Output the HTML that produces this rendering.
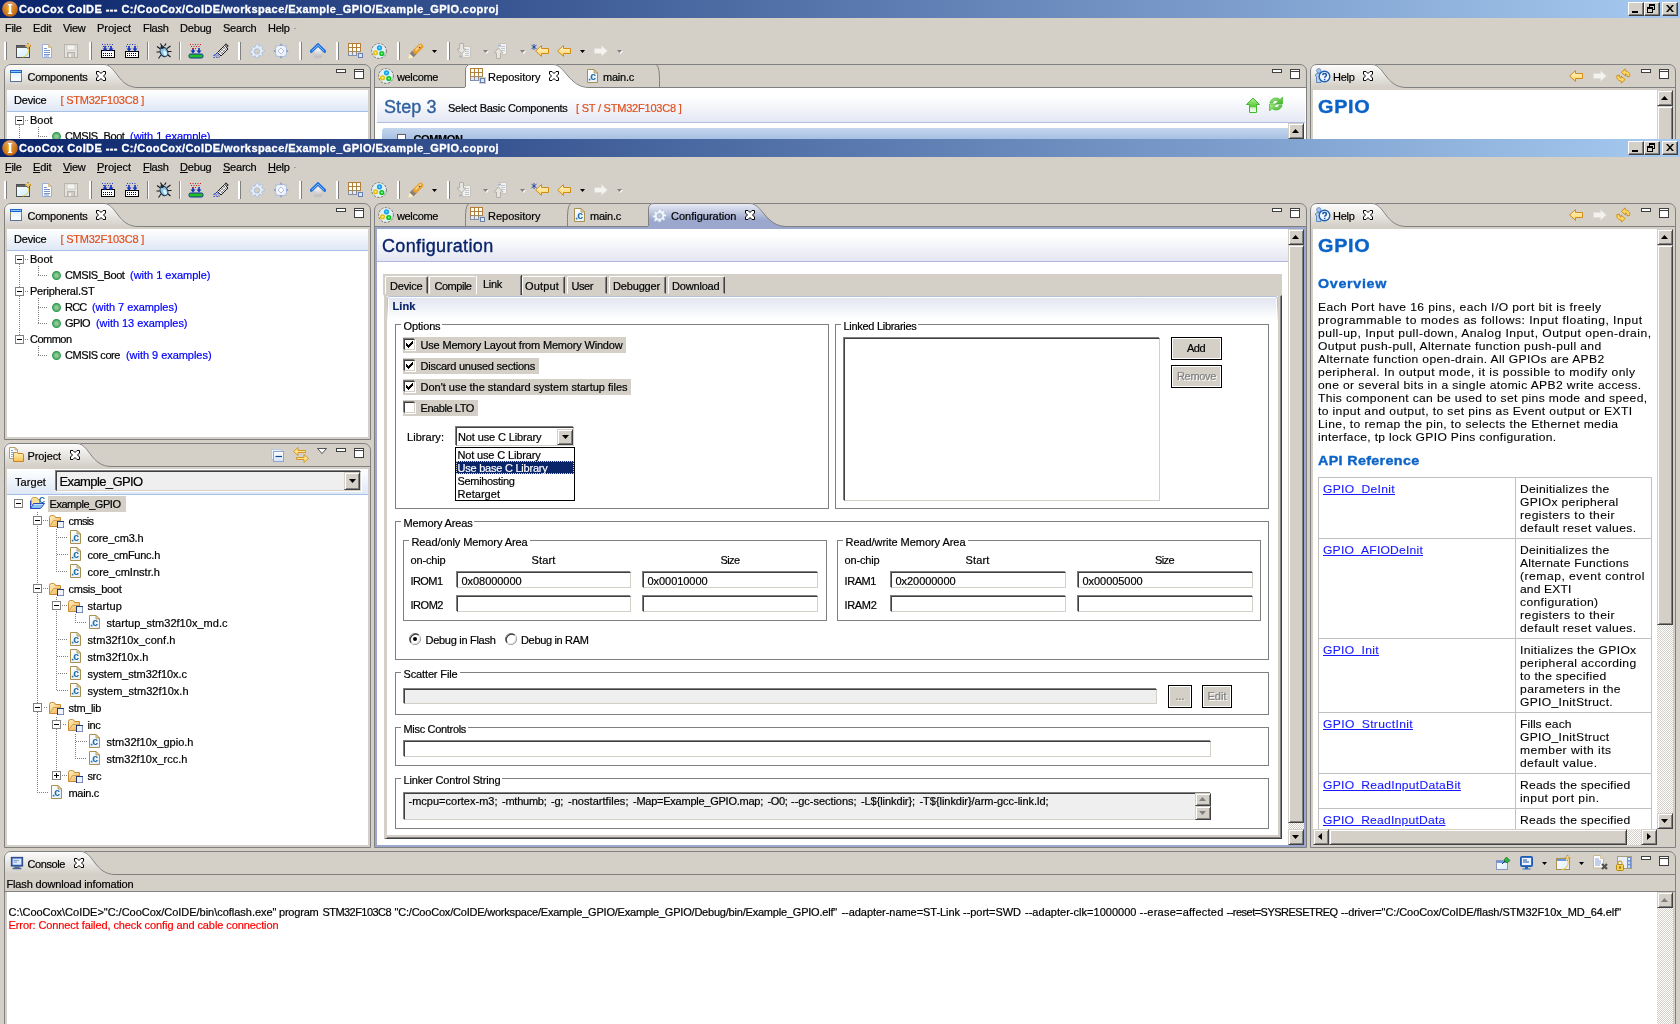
<!DOCTYPE html><html lang="en"><head><meta charset="utf-8"><title>CoIDE</title><style>
html,body{margin:0;padding:0}
body{width:1680px;height:1024px;overflow:hidden;background:#d4d0c8;position:relative;font-family:"Liberation Sans",sans-serif;font-size:11px;line-height:13px;color:#000}
div,span,svg{position:absolute;box-sizing:border-box}
span{white-space:nowrap}
.win{left:0;width:1680px;overflow:hidden}
.b{font-weight:bold}
.blue{color:#0000ff}
.org{color:#e0501c}
.sunk{border:1px solid;border-color:#404040 #d4d0c8 #d4d0c8 #404040;box-shadow:-1px -1px 0 #808080, 1px 1px 0 #fff;background:#fff}
.btn{background:#d4d0c8;border:1px solid;border-color:#fff #404040 #404040 #fff;box-shadow:inset -1px -1px 0 #808080}
.sbb{background:#d4d0c8;border:1px solid;border-color:#d4d0c8 #404040 #404040 #d4d0c8;box-shadow:inset 1px 1px 0 #fff, inset -1px -1px 0 #808080}
.grp{border:1px solid #808080;box-shadow:1px 1px 0 #fff, inset 1px 1px 0 #fff}
.lg{background:#fff;padding:0 3px}
.hv{font-family:"Liberation Sans",sans-serif}
.win{will-change:transform}
span{-webkit-text-stroke:.2px}
.vp,.vd,.vl{-webkit-text-stroke:.1px}
.vh1,.vh2{-webkit-text-stroke:.35px}
.h19{-webkit-text-stroke:.35px}
.ttl{-webkit-text-stroke:.3px #fff}
</style></head><body><div class="win" style="top:0;height:139px">
<div style="left:0px;top:0px;width:1680px;height:18px;background:linear-gradient(90deg,#0a246a 0%,#a6caf0 100%)"></div>
<svg style="left:2px;top:1px;" width="16" height="16" viewBox="0 0 16 16"><defs><radialGradient id="og" cx=".45" cy=".5" r=".55"><stop offset="0" stop-color="#f4b400"/><stop offset=".45" stop-color="#d88420"/><stop offset="1" stop-color="#c06018"/></radialGradient><linearGradient id="og2" x1="0" y1="0" x2="0" y2="1"><stop offset="0" stop-color="#fff" stop-opacity=".35"/><stop offset=".5" stop-color="#fff" stop-opacity="0"/></linearGradient></defs><circle cx="8" cy="8" r="7.800" fill="url(#og)"/><circle cx="8" cy="8" r="7.800" fill="url(#og2)"/><path d="M5.800 3h4.400v1.200H9.200v7.600h1v1.200H5.800v-1.200h1V4.200h-1z" fill="#fff"/></svg>
<span class="ttl" style="left:19px;top:3px;color:#fff;font-weight:bold;letter-spacing:0.418px;">CooCox CoIDE --- C:/CooCox/CoIDE/workspace/Example_GPIO/Example_GPIO.coproj</span>
<div class="btn" style="left:1628px;top:2px;width:16px;height:14px;"></div>
<div class="btn" style="left:1644px;top:2px;width:16px;height:14px;"></div>
<div class="btn" style="left:1662px;top:2px;width:16px;height:14px;"></div>
<div style="left:1632px;top:11px;width:6px;height:2px;background:#000"></div>
<svg style="left:1647px;top:4px;" width="8" height="9" viewBox="0 0 8 9"><path d="M2 0h6v6h-2v-1h1v-3h-4v1h-1zM0 3h6v6h-6zM1 5v3h4v-3z" fill="#000" fill-rule="evenodd"/></svg>
<svg style="left:1666px;top:5px;" width="8" height="7" viewBox="0 0 8 7"><path d="M0 0h2l2 2.500L6 0h2L5 3.500 8 7H6L4 4.500 2 7H0l3-3.500z" fill="#000"/></svg>
<span class="menu" style="left:5px;top:22px;;letter-spacing:-0.309px;">File</span>
<span class="menu" style="left:33px;top:22px;;letter-spacing:-0.117px;">Edit</span>
<span class="menu" style="left:63px;top:22px;;letter-spacing:-0.289px;">View</span>
<span class="menu" style="left:97px;top:22px;;letter-spacing:-0.036px;">Project</span>
<span class="menu" style="left:143px;top:22px;;letter-spacing:-0.281px;">Flash</span>
<span class="menu" style="left:180px;top:22px;;letter-spacing:-0.184px;">Debug</span>
<span class="menu" style="left:223px;top:22px;;letter-spacing:-0.227px;">Search</span>
<span class="menu" style="left:268px;top:22px;;letter-spacing:-0.281px;">Help</span>
<div style="left:294px;top:28px;width:2px;height:1px;background:#a0a0a0"></div>
<div style="left:4px;top:42px;width:2px;height:18px;background:#fff"></div>
<div style="left:6px;top:42px;width:1px;height:18px;background:#808080"></div>
<div style="left:89px;top:42px;width:2px;height:18px;background:#fff"></div>
<div style="left:91px;top:42px;width:1px;height:18px;background:#808080"></div>
<div style="left:238px;top:42px;width:2px;height:18px;background:#fff"></div>
<div style="left:240px;top:42px;width:1px;height:18px;background:#808080"></div>
<div style="left:299px;top:42px;width:2px;height:18px;background:#fff"></div>
<div style="left:301px;top:42px;width:1px;height:18px;background:#808080"></div>
<div style="left:336px;top:42px;width:2px;height:18px;background:#fff"></div>
<div style="left:338px;top:42px;width:1px;height:18px;background:#808080"></div>
<div style="left:397px;top:42px;width:2px;height:18px;background:#fff"></div>
<div style="left:399px;top:42px;width:1px;height:18px;background:#808080"></div>
<div style="left:447px;top:42px;width:2px;height:18px;background:#fff"></div>
<div style="left:449px;top:42px;width:1px;height:18px;background:#808080"></div>
<div style="left:147px;top:42px;width:1px;height:18px;background:#808080"></div>
<div style="left:148px;top:42px;width:1px;height:18px;background:#fff"></div>
<div style="left:179px;top:42px;width:1px;height:18px;background:#808080"></div>
<div style="left:180px;top:42px;width:1px;height:18px;background:#fff"></div>
<svg style="left:16px;top:43px;" width="16" height="16" viewBox="0 0 16 16"><defs><linearGradient id="nwg" x1="0" y1="0" x2="1" y2="1"><stop offset="0" stop-color="#fff"/><stop offset="1" stop-color="#c8ecff"/></linearGradient></defs><rect x=".5" y="2.500" width="13" height="12" fill="url(#nwg)" stroke="#505050"/><rect x="1" y="3" width="12" height="2" fill="#606060"/><path d="M12.500 6c1 4-2 7.500-6 8" fill="none" stroke="#f0d060" stroke-width="1.100"/><path d="M12 0v6M9 3h6" stroke="#c89020" stroke-width="1.800"/><path d="M12 1v4M10 3h4" stroke="#fff4c0" stroke-width=".7"/></svg>
<svg style="left:40px;top:43px;" width="16" height="16" viewBox="0 0 16 16"><path d="M2.500 1.500h6l3 3v10h-9z" fill="#fff" stroke="#9ab0d8"/><path d="M8.500 1.500v3h3z" fill="#e0cc98" stroke="#c8b078" stroke-width=".7"/><path d="M4 5.500h3M4 7.500h6M4 9.500h6M4 11.500h6M4 13h5" stroke="#6888c8" stroke-width=".9"/></svg>
<svg style="left:63px;top:43px;" width="16" height="16" viewBox="0 0 16 16"><rect x="1.5" y="1.5" width="13" height="13" fill="#e4e2dc" stroke="#b8b4ac"/><rect x="4" y="2" width="8" height="5" fill="#f4f4f2" stroke="#c0bcb4" stroke-width=".6"/><rect x="4.5" y="9.5" width="7" height="5" fill="#d0ccc4" stroke="#b8b4ac"/><rect x="6" y="11" width="2" height="3" fill="#f0f0ee"/></svg>
<svg style="left:100px;top:43px;" width="16" height="16" viewBox="0 0 16 16"><rect x="1.5" y="7.5" width="13" height="7" fill="#fff" stroke="#000"/><path d="M3 10.5h10M3 12.5h10" stroke="#000" stroke-dasharray="1 1"/><path d="M5 3v4M11 3v4" stroke="#1030c0" stroke-width="1.6"/><path d="M2.5 5.5l2.5 3 2.5-3zM8.500 5.5l2.500 3 2.500-3z" fill="#1030c0"/><path d="M2 1.500h12M3 3.500h10" stroke="#2040c0" stroke-dasharray="1 1.500"/></svg>
<svg style="left:124px;top:43px;" width="16" height="16" viewBox="0 0 16 16"><rect x="1.5" y="8.5" width="13" height="6" fill="#fff" stroke="#000"/><path d="M3 10.5h10M3 12.5h10" stroke="#000" stroke-dasharray="1 1"/><path d="M5 3v4M11 3v4" stroke="#1030c0" stroke-width="1.6"/><path d="M2.500 5.500l2.500 3 2.500-3zM8.500 5.500l2.500 3 2.500-3z" fill="#1030c0"/><path d="M3 1.500h10M2 3.500h3M11 3.500h3" stroke="#2040c0" stroke-dasharray="1 1.500"/></svg>
<svg style="left:156px;top:43px;" width="16" height="16" viewBox="0 0 16 16"><path d="M4.500 6L1 3.500M4 9H.5M5 12l-2.500 3.500M11 5.500L14.500 3M12 8.500h3.500M11.500 11.500l3 2.500M6 3.500L4.500 .5M8.500 3L10 .5" stroke="#101828" stroke-width="1.100" fill="none"/><ellipse cx="8" cy="9" rx="3.700" ry="4.800" transform="rotate(-25 8 9)" fill="#8cc4e4" stroke="#183048"/><ellipse cx="9" cy="10" rx="1.500" ry="2.600" transform="rotate(-25 9 10)" fill="#e0f4fc"/><circle cx="6.300" cy="4.300" r="1.800" fill="#182838"/></svg>
<svg style="left:188px;top:43px;" width="16" height="16" viewBox="0 0 16 16"><rect x="1" y="11" width="14" height="4" rx="1.5" fill="#20c020" stroke="#1030a0"/><path d="M5 5v4M11 5v4" stroke="#1030c0" stroke-width="1.6"/><path d="M2.500 7.500l2.500 3 2.500-3zM8.500 7.500l2.500 3 2.500-3z" fill="#1030c0"/><path d="M2 1.500h12M3 3.500h10M4 5.500h1M7 5.500h2M11 5.500h1" stroke="#d02020" stroke-dasharray="1 1.500"/></svg>
<svg style="left:213px;top:43px;" width="16" height="16" viewBox="0 0 16 16"><path d="M4.500 9.500l7-7 3.500 3.500-7 7z" fill="#fff" stroke="#202020"/><path d="M6 10l6-6M7.500 11.500l6-6M6.500 8l3.500 3.500M8.500 6L12 9.500M10.500 4L14 7.500" stroke="#606060" stroke-width=".7"/><path d="M11.500 2.500L13 .8l2.300 2.300L13.500 4.500" fill="#909090" stroke="#202020"/><path d="M.5 14.500h1.200M2.500 13h1.200M4.500 12h1.200M1.500 11.500h1.200M3.500 14.500h1.200M5.500 14h1.200M.5 12.500h1.200M3 10.500h1.200" stroke="#1030c0" stroke-width="1.200"/></svg>
<svg style="left:249px;top:43px;" width="16" height="16" viewBox="0 0 16 16"><path d="M8 .8l1.200 0 .5 2 1.300.6 1.800-1 1 1-1 1.800.6 1.300 2 .5v1.600l-2 .5-.6 1.300 1 1.800-1 1-1.800-1-1.300.6-.5 2H6.800l-.5-2L5 13.300l-1.800 1-1-1 1-1.800-.6-1.300-2-.5V8.100l2-.5.6-1.300-1-1.800 1-1 1.800 1 1.300-.6.500-2z" fill="#e4ecf6" stroke="#a8bcd8" stroke-width=".8"/><circle cx="8" cy="8.400" r="2.700" fill="#d4d0c8" stroke="#a8b8d0" stroke-width=".9"/></svg>
<svg style="left:273px;top:43px;" width="16" height="16" viewBox="0 0 16 16"><rect x="2.500" y="2.500" width="11" height="11" rx="3" fill="#eef2fa" stroke="#a8b8d8"/><path d="M8 5l3 3-3 3-3-3z" fill="#fff" stroke="#a8b8d8" stroke-width=".9"/><path d="M8 .8v1.700M8 13.500v1.700M.8 8h1.700M13.500 8h1.700" stroke="#90a4cc" stroke-width="2"/><path d="M2.500 2.500l1 1M13.500 2.500l-1 1M2.500 13.500l1-1M13.500 13.500l-1-1" stroke="#a8b8d8" stroke-dasharray="1 1"/></svg>
<svg style="left:310px;top:43px;" width="16" height="16" viewBox="0 0 16 16"><defs><linearGradient id="hmg" x1="0" y1="0" x2="0" y2="1"><stop offset="0" stop-color="#fff"/><stop offset="1" stop-color="#b8b8b8"/></linearGradient></defs><path d="M4 8v5.500q0 1.300 1.300 1.300h5.400q1.300 0 1.300-1.300V8L8 4.500z" fill="url(#hmg)" stroke="#c8c8c8" stroke-width=".6"/><path d="M1.200 8.300L8 1.800l6.800 6.500" fill="none" stroke="#2070e0" stroke-width="3" stroke-linejoin="miter" stroke-linecap="round"/><path d="M1.800 8L8 2.200 14.200 8" fill="none" stroke="#78b8ff" stroke-width="1"/></svg>
<svg style="left:348px;top:43px;" width="16" height="16" viewBox="0 0 16 16"><defs><linearGradient id="grg" x1="0" y1="0" x2="0" y2="1"><stop offset="0" stop-color="#b87c30"/><stop offset=".6" stop-color="#b08040"/><stop offset="1" stop-color="#8090b0"/></linearGradient></defs><rect x=".5" y=".5" width="12" height="12" fill="#fff" stroke="url(#grg)"/><rect x="1" y="9" width="11" height="3" fill="#dce8fc"/><path d="M4.500 .5v12M8.500 .5v12" stroke="url(#grg)"/><path d="M.5 4.500h12" stroke="#b48038"/><path d="M.5 8.500h12" stroke="#a08860"/><rect x="9" y="9" width="7" height="7" fill="#d4d0c8"/><rect x="10.500" y="10.500" width="4" height="4" fill="#dce8fc" stroke="#6880b0"/></svg>
<svg style="left:371px;top:43px;" width="16" height="16" viewBox="0 0 16 16"><circle cx="8" cy="8" r="7.400" fill="#e0f0f8" stroke="#807868" stroke-dasharray="2.500 1.200"/><circle cx="8.500" cy="4.800" r="2.600" fill="#18a0e8"/><circle cx="4.500" cy="9.800" r="2.600" fill="#e8c010"/><circle cx="10.800" cy="10.500" r="2.600" fill="#10c020"/><circle cx="8.500" cy="4.800" r="1" fill="#60e8ff"/><circle cx="4.500" cy="9.800" r="1" fill="#fff0a0"/><circle cx="10.800" cy="10.500" r="1" fill="#90ff98"/></svg>
<svg style="left:408px;top:43px;" width="16" height="16" viewBox="0 0 16 16"><path d="M.5 15.500L1.800 10.500 5.500 14.200Z" fill="#fff8d8" stroke="#f0e0a0" stroke-width=".6"/><path d="M3.600 12.400L7.800 8.200" stroke="#888078" stroke-width="5.400"/><path d="M7.800 8.200L12.600 3.400" stroke="#e8a030" stroke-width="5.400" stroke-linecap="round"/><path d="M8 7L12.500 2.500" stroke="#ffd890" stroke-width="1.600" stroke-linecap="round"/><circle cx="11.500" cy="4.500" r=".8" fill="#3050a0"/></svg>
<svg style="left:432px;top:50px;" width="5" height="3" viewBox="0 0 5 3"><path d="M0 0h5L2.500 3z" fill="#000"/></svg>
<svg style="left:457px;top:43px;" width="16" height="16" viewBox="0 0 16 16"><path d="M6.500 3.500h7v11h-8v-3" fill="#f2f1ee" stroke="#c8c4bc"/><path d="M8 6.500h4M8 8.500h4M8 10.500h4M8 12.500h4" stroke="#c0c8d8"/><path d="M2.500 .5h4v5.500h2.500l-4.500 5-4.500-5h2.500z" fill="#e6e4de" stroke="#b4b0a8" stroke-linejoin="round"/><rect x="2" y="12.500" width="3" height="2" fill="#a8b4cc"/></svg>
<svg style="left:484px;top:51px;" width="5" height="3" viewBox="0 0 5 3"><path d="M0 0h5L2.500 3z" fill="#fff"/></svg>
<svg style="left:483px;top:50px;" width="5" height="3" viewBox="0 0 5 3"><path d="M0 0h5L2.500 3z" fill="#808080"/></svg>
<svg style="left:494px;top:43px;" width="16" height="16" viewBox="0 0 16 16"><path d="M3.500 .5h9v11h-5" fill="#f2f1ee" stroke="#c8c4bc"/><path d="M7 3.500h4M7 5.500h4M7 7.500h4" stroke="#c0c8d8"/><rect x="4" y="1.500" width="3" height="2" fill="#a8b4cc"/><path d="M2.500 15.500h4v-5.500h2.500l-4.500-5-4.500 5h2.500z" fill="#e6e4de" stroke="#b4b0a8" stroke-linejoin="round"/></svg>
<svg style="left:521px;top:51px;" width="5" height="3" viewBox="0 0 5 3"><path d="M0 0h5L2.500 3z" fill="#fff"/></svg>
<svg style="left:520px;top:50px;" width="5" height="3" viewBox="0 0 5 3"><path d="M0 0h5L2.500 3z" fill="#808080"/></svg>
<svg style="left:535px;top:45px;" width="14" height="12" viewBox="0 0 14 12"><defs><linearGradient id="ab" x1="0" y1="0" x2="0" y2="1"><stop offset="0" stop-color="#fff8d8"/><stop offset="1" stop-color="#ffd058"/></linearGradient></defs><path d="M.6 6L6.500 .6V3.500H13.500V8.500H6.500V11.400Z" fill="url(#ab)" stroke="#d08c18" stroke-linejoin="round"/></svg>
<svg style="left:531px;top:44px;" width="6" height="6" viewBox="0 0 6 6"><path d="M3 0v6M.5 1.200l5 3.600M5.500 1.200l-5 3.600" stroke="#2040a0" stroke-width=".9"/></svg>
<svg style="left:557px;top:45px;" width="14" height="12" viewBox="0 0 14 12"><defs><linearGradient id="ab" x1="0" y1="0" x2="0" y2="1"><stop offset="0" stop-color="#fff8d8"/><stop offset="1" stop-color="#ffd058"/></linearGradient></defs><path d="M.6 6L6.500 .6V3.500H13.500V8.500H6.500V11.400Z" fill="url(#ab)" stroke="#d08c18" stroke-linejoin="round"/></svg>
<svg style="left:580px;top:50px;" width="5" height="3" viewBox="0 0 5 3"><path d="M0 0h5L2.500 3z" fill="#000"/></svg>
<svg style="left:594px;top:45px;" width="14" height="12" viewBox="0 0 14 12"><path d="M13.400 6L7.500 .6V3.500H.5V8.500H7.500V11.400Z" fill="#f4f3f0" stroke="#e0ded8" stroke-linejoin="round"/></svg>
<svg style="left:618px;top:51px;" width="5" height="3" viewBox="0 0 5 3"><path d="M0 0h5L2.500 3z" fill="#fff"/></svg>
<svg style="left:617px;top:50px;" width="5" height="3" viewBox="0 0 5 3"><path d="M0 0h5L2.500 3z" fill="#808080"/></svg>
<div style="left:4px;top:64px;width:367px;height:120px;border:1px solid #808080;border-radius:7px 7px 0 0;background:#d4d0c8"></div>
<svg style="left:4px;top:64px;" width="136" height="24" viewBox="0 0 136 24"><defs><linearGradient id="tg4_64" x1="0" y1="0" x2="0" y2="1"><stop offset="0" stop-color="#fff"/><stop offset="1" stop-color="#d4d0c8"/></linearGradient></defs><path d="M0 23V6Q0 0 6 0H100C112 0 114 23 134 23Z" fill="url(#tg4_64)"/><path d="M.5 24V7Q.5 .5 7 .5H100C112 .5 114 23.500 134 23.500" fill="none" stroke="#808080"/></svg>
<div style="left:138px;top:87px;width:232px;height:1px;background:#808080"></div>
<div style="left:7px;top:90px;width:361px;height:91px;background:#fff"></div>
<svg style="left:10px;top:70px;" width="12" height="12" viewBox="0 0 12 12"><defs><linearGradient id="ctg" x1="0" y1="0" x2="0" y2="1"><stop offset="0" stop-color="#d8f0ff"/><stop offset="1" stop-color="#fff"/></linearGradient><linearGradient id="cts" x1="0" y1="0" x2="0" y2="1"><stop offset="0" stop-color="#b09848"/><stop offset="1" stop-color="#5870a0"/></linearGradient></defs><rect x=".5" y=".5" width="11" height="11" fill="url(#ctg)" stroke="url(#cts)"/><rect x="0" y="0" width="12" height="3" fill="#1c68c8"/><rect x="1" y="1" width="10" height="1" fill="#88c0f8"/><path d="M0 11.500h12" stroke="#5870a0"/></svg>
<span class="tab" style="left:27.5px;top:71px;;letter-spacing:-0.237px;">Components</span>
<svg style="left:96px;top:71px;" width="10" height="10" viewBox="0 0 10 10"><path d="M.5 .5H3L5 2.500 7 .5H9.500V3L7.500 5 9.500 7V9.500H7L5 7.500 3 9.500H.5V7L2.500 5 .5 3Z" fill="#fff" stroke="#000" stroke-width="1"/></svg>
<div style="left:336px;top:69px;width:10px;height:4px;border:1px solid #404040;background:#fff"></div>
<div style="left:354px;top:69px;width:10px;height:10px;border:1px solid #404040;background:#fff"></div>
<div style="left:355px;top:71px;width:8px;height:1px;background:#404040"></div>
<div style="left:7px;top:90px;width:361px;height:21px;background:linear-gradient(#fff,#dfe8f6)"></div>
<div style="left:7px;top:111px;width:361px;height:1px;background:#a4c0e4"></div>
<span style="left:14px;top:94px;;letter-spacing:-0.188px;">Device</span>
<span class="org" style="left:60.5px;top:94px;;letter-spacing:-0.222px;">[ STM32F103C8 ]</span>
<div style="left:19px;top:125px;width:1px;height:76px;background:repeating-linear-gradient(180deg,#808080 0 1px,transparent 1px 2px)"></div>
<div style="left:38px;top:127px;width:1px;height:10px;background:repeating-linear-gradient(180deg,#808080 0 1px,transparent 1px 2px)"></div>
<div style="left:38px;top:159px;width:1px;height:26px;background:repeating-linear-gradient(180deg,#808080 0 1px,transparent 1px 2px)"></div>
<div style="left:38px;top:207px;width:1px;height:10px;background:repeating-linear-gradient(180deg,#808080 0 1px,transparent 1px 2px)"></div>
<div style="left:15px;top:116px;width:9px;height:9px;border:1px solid #808080;background:#fff"></div>
<div style="left:17px;top:120px;width:5px;height:1px;background:#000"></div>
<div style="left:25px;top:120px;width:4px;height:1px;background:repeating-linear-gradient(90deg,#808080 0 1px,transparent 1px 2px)"></div>
<span style="left:30px;top:114px;;letter-spacing:-0.035px;">Boot</span>
<div style="left:38px;top:136px;width:9px;height:1px;background:repeating-linear-gradient(90deg,#808080 0 1px,transparent 1px 2px)"></div>
<svg style="left:52px;top:132px;" width="9" height="9" viewBox="0 0 9 9"><circle cx="4.500" cy="4.500" r="3.900" fill="#6cb87c" stroke="#2a9a4a" stroke-width="1.100"/><circle cx="4.500" cy="4.500" r="2" fill="#90c898"/></svg>
<span style="left:65px;top:130px;;letter-spacing:-0.409px;">CMSIS_Boot</span>
<span class="blue" style="left:130px;top:130px;;letter-spacing:-0.013px;">(with 1 example)</span>
<div style="left:15px;top:148px;width:9px;height:9px;border:1px solid #808080;background:#fff"></div>
<div style="left:17px;top:152px;width:5px;height:1px;background:#000"></div>
<div style="left:25px;top:152px;width:4px;height:1px;background:repeating-linear-gradient(90deg,#808080 0 1px,transparent 1px 2px)"></div>
<span style="left:30px;top:146px;;letter-spacing:-0.213px;">Peripheral.ST</span>
<div style="left:38px;top:168px;width:9px;height:1px;background:repeating-linear-gradient(90deg,#808080 0 1px,transparent 1px 2px)"></div>
<svg style="left:52px;top:164px;" width="9" height="9" viewBox="0 0 9 9"><circle cx="4.500" cy="4.500" r="3.900" fill="#6cb87c" stroke="#2a9a4a" stroke-width="1.100"/><circle cx="4.500" cy="4.500" r="2" fill="#90c898"/></svg>
<span style="left:65px;top:162px;;letter-spacing:-0.781px;">RCC</span>
<span class="blue" style="left:92px;top:162px;;letter-spacing:-0.041px;">(with 7 examples)</span>
<div style="left:38px;top:184px;width:9px;height:1px;background:repeating-linear-gradient(90deg,#808080 0 1px,transparent 1px 2px)"></div>
<svg style="left:52px;top:180px;" width="9" height="9" viewBox="0 0 9 9"><circle cx="4.500" cy="4.500" r="3.900" fill="#6cb87c" stroke="#2a9a4a" stroke-width="1.100"/><circle cx="4.500" cy="4.500" r="2" fill="#90c898"/></svg>
<span style="left:65px;top:178px;;letter-spacing:-0.629px;">GPIO</span>
<span class="blue" style="left:96px;top:178px;;letter-spacing:-0.046px;">(with 13 examples)</span>
<div style="left:15px;top:196px;width:9px;height:9px;border:1px solid #808080;background:#fff"></div>
<div style="left:17px;top:200px;width:5px;height:1px;background:#000"></div>
<div style="left:25px;top:200px;width:4px;height:1px;background:repeating-linear-gradient(90deg,#808080 0 1px,transparent 1px 2px)"></div>
<span style="left:30px;top:194px;;letter-spacing:-0.521px;">Common</span>
<div style="left:38px;top:216px;width:9px;height:1px;background:repeating-linear-gradient(90deg,#808080 0 1px,transparent 1px 2px)"></div>
<svg style="left:52px;top:212px;" width="9" height="9" viewBox="0 0 9 9"><circle cx="4.500" cy="4.500" r="3.900" fill="#6cb87c" stroke="#2a9a4a" stroke-width="1.100"/><circle cx="4.500" cy="4.500" r="2" fill="#90c898"/></svg>
<span style="left:65px;top:210px;;letter-spacing:-0.430px;">CMSIS core</span>
<span class="blue" style="left:126px;top:210px;;letter-spacing:-0.041px;">(with 9 examples)</span>
<div style="left:374px;top:64px;width:933px;height:120px;border:1px solid #808080;border-radius:7px 7px 0 0;background:#d4d0c8"></div>
<div style="left:375px;top:88px;width:931px;height:96px;background:#fff"></div>
<svg style="left:378px;top:68px;" width="16" height="16" viewBox="0 0 16 16"><circle cx="8" cy="8" r="7.400" fill="#e0f0f8" stroke="#807868" stroke-dasharray="2.500 1.200"/><circle cx="8.500" cy="4.800" r="2.600" fill="#18a0e8"/><circle cx="4.500" cy="9.800" r="2.600" fill="#e8c010"/><circle cx="10.800" cy="10.500" r="2.600" fill="#10c020"/><circle cx="8.500" cy="4.800" r="1" fill="#60e8ff"/><circle cx="4.500" cy="9.800" r="1" fill="#fff0a0"/><circle cx="10.800" cy="10.500" r="1" fill="#90ff98"/></svg>
<span class="tab" style="left:397px;top:71px;;letter-spacing:-0.344px;">welcome</span>
<svg style="left:465px;top:64px;" width="126" height="24" viewBox="0 0 126 24"><defs><linearGradient id="ag0" x1="0" y1="0" x2="0" y2="1"><stop offset="0" stop-color="#fff"/><stop offset="1" stop-color="#fff"/></linearGradient></defs><path d="M0 23V6Q0 0 6 0H88C100 0 104 23 124 23V24H0Z" fill="url(#ag0)"/><path d="M.5 23V6Q.5 .5 6 .5H88C100 .5 104 23.500 124 23.500" fill="none" stroke="#808080"/></svg>
<div style="left:375px;top:87px;width:90px;height:1px;background:#808080"></div>
<div style="left:589px;top:87px;width:717px;height:1px;background:#808080"></div>
<svg style="left:470px;top:68px;" width="16" height="16" viewBox="0 0 16 16"><defs><linearGradient id="grg" x1="0" y1="0" x2="0" y2="1"><stop offset="0" stop-color="#b87c30"/><stop offset=".6" stop-color="#b08040"/><stop offset="1" stop-color="#8090b0"/></linearGradient></defs><rect x=".5" y=".5" width="12" height="12" fill="#fff" stroke="url(#grg)"/><rect x="1" y="9" width="11" height="3" fill="#dce8fc"/><path d="M4.500 .5v12M8.500 .5v12" stroke="url(#grg)"/><path d="M.5 4.500h12" stroke="#b48038"/><path d="M.5 8.500h12" stroke="#a08860"/><rect x="9" y="9" width="7" height="7" fill="#d4d0c8"/><rect x="10.500" y="10.500" width="4" height="4" fill="#dce8fc" stroke="#6880b0"/></svg>
<span class="tab" style="left:488px;top:71px;;letter-spacing:-0.008px;">Repository</span>
<svg style="left:587px;top:69px;" width="11" height="14" viewBox="0 0 11 14"><defs><linearGradient id="cfg" x1="0" y1="0" x2="1" y2="1"><stop offset="0" stop-color="#fff"/><stop offset="1" stop-color="#e4ecfa"/></linearGradient></defs><path d="M.5 .5H7L10.500 4V13.500H.5Z" fill="url(#cfg)" stroke="#a89050"/><path d="M7 .5V4H10.500Z" fill="#ecdcb0" stroke="#a89050" stroke-width=".8"/><text x="3.300" y="11.300" font-family="Liberation Sans" font-weight="bold" font-size="10.500" fill="#2070a8">c</text><rect x="1.800" y="9.800" width="1.600" height="1.600" fill="#2070a8"/></svg>
<span class="tab" style="left:603px;top:71px;;letter-spacing:-0.234px;">main.c</span>
<svg style="left:656px;top:65px;" width="6" height="22" viewBox="0 0 6 22"><path d="M.5 0C4 2 3.500 14 3.500 22" fill="none" stroke="#808080"/></svg>
<svg style="left:549px;top:71px;" width="10" height="10" viewBox="0 0 10 10"><path d="M.5 .5H3L5 2.500 7 .5H9.500V3L7.500 5 9.500 7V9.500H7L5 7.500 3 9.500H.5V7L2.500 5 .5 3Z" fill="#fff" stroke="#000" stroke-width="1"/></svg>
<div style="left:1272px;top:69px;width:10px;height:4px;border:1px solid #404040;background:#fff"></div>
<div style="left:1290px;top:69px;width:10px;height:10px;border:1px solid #404040;background:#fff"></div>
<div style="left:1291px;top:71px;width:8px;height:1px;background:#404040"></div>
<div style="left:377px;top:90px;width:928px;height:32px;background:linear-gradient(#fff 0%,#fff 20%,#e4e8f4 100%)"></div>
<div style="left:377px;top:122px;width:928px;height:1px;background:#b0bce0"></div>
<span class="h19" style="left:384px;top:104px;font-size:18px;color:#2f5f9f;line-height:22px;margin-top:-8px;letter-spacing:0.076px;">Step 3</span>
<span style="left:448px;top:102px;;letter-spacing:-0.281px;">Select Basic Components</span>
<span class="org" style="left:576px;top:102px;;letter-spacing:-0.217px;">[ ST / STM32F103C8 ]</span>
<svg style="left:1245px;top:97px;" width="16" height="16" viewBox="0 0 16 16"><defs><linearGradient id="gug" x1="0" y1="0" x2="0" y2="1"><stop offset="0" stop-color="#b4f098"/><stop offset=".6" stop-color="#58c838"/><stop offset=".68" stop-color="#d8f4c8"/><stop offset="1" stop-color="#f4fcee"/></linearGradient></defs><path d="M8 1L1.500 7.500H4.500V15.500H11.500V7.500H14.500Z" fill="url(#gug)" stroke="#44b82c" stroke-linejoin="round"/></svg>
<svg style="left:1268px;top:96px;" width="16" height="16" viewBox="0 0 16 16"><defs><linearGradient id="grf" x1="0" y1="0" x2="1" y2="1"><stop offset="0" stop-color="#b0f090"/><stop offset="1" stop-color="#38b020"/></linearGradient></defs><path d="M2 7C2.500 2 9 .5 12 3.500L14.500 1V8H7.500L10 5.500C8 3.500 5 4.500 4.800 7Z" fill="url(#grf)" stroke="#48b830" stroke-width=".7" stroke-linejoin="round"/><path d="M14 9C13.500 14 7 15.500 4 12.500L1.500 15V8H8.500L6 10.500C8 12.500 11 11.500 11.200 9Z" fill="url(#grf)" stroke="#48b830" stroke-width=".7" stroke-linejoin="round"/></svg>
<div style="left:382px;top:128px;width:906px;height:14px;background:linear-gradient(#c4d6ee,#9fbbe0);border-radius:3px 0 0 0"></div>
<div style="left:397px;top:134px;width:9px;height:9px;border:1px solid #606060;background:#fff"></div>
<span style="left:413.5px;top:133px;font-weight:bold;letter-spacing:-0.388px;">COMMON</span>
<div style="left:1288px;top:123px;width:16px;height:20px;background:repeating-conic-gradient(#fff 0 25%,#d4d0c8 0 50%) 0 0/2px 2px"></div>
<div class="sbb" style="left:1288px;top:123px;width:16px;height:16px;"></div>
<svg style="left:1292px;top:129px;" width="7" height="4" viewBox="0 0 7 4"><path d="M0 4h7L3.500 0z" fill="#000"/></svg>
<div style="left:1310px;top:64px;width:366px;height:120px;border:1px solid #808080;border-radius:7px 7px 0 0;background:#d4d0c8"></div>
<svg style="left:1310px;top:64px;" width="98" height="24" viewBox="0 0 98 24"><defs><linearGradient id="tg1310_64" x1="0" y1="0" x2="0" y2="1"><stop offset="0" stop-color="#fff"/><stop offset="1" stop-color="#d4d0c8"/></linearGradient></defs><path d="M0 23V6Q0 0 6 0H62C74 0 76 23 96 23Z" fill="url(#tg1310_64)"/><path d="M.5 24V7Q.5 .5 7 .5H62C74 .5 76 23.500 96 23.500" fill="none" stroke="#808080"/></svg>
<div style="left:1406px;top:87px;width:269px;height:1px;background:#808080"></div>
<div style="left:1313px;top:90px;width:360px;height:91px;background:#fff"></div>
<svg style="left:1315px;top:68px;" width="16" height="16" viewBox="0 0 16 16"><circle cx="3.800" cy="2.800" r="2.200" fill="#a8c4e8" stroke="#5888c8" stroke-width=".8"/><path d="M1.500 14.500V8.500L.5 8V6.500Q2 5 4 5.500L6 6.500V14.500Z" fill="#b8d0ec" stroke="#4878b8" stroke-width=".8"/><circle cx="9.500" cy="8.500" r="5.300" fill="#f4faff" stroke="#2060b0" stroke-width="1.400"/><path d="M7.800 7.200c0-2.300 3.600-2.300 3.600 0 0 1.400-1.800 1.400-1.800 2.600" fill="none" stroke="#2058a8" stroke-width="1.500"/><rect x="8.900" y="10.800" width="1.500" height="1.400" fill="#2058a8"/></svg>
<span class="tab" style="left:1333px;top:71px;;letter-spacing:-0.281px;">Help</span>
<svg style="left:1363px;top:71px;" width="10" height="10" viewBox="0 0 10 10"><path d="M.5 .5H3L5 2.500 7 .5H9.500V3L7.500 5 9.500 7V9.500H7L5 7.500 3 9.500H.5V7L2.500 5 .5 3Z" fill="#fff" stroke="#000" stroke-width="1"/></svg>
<svg style="left:1569px;top:70px;" width="14" height="12" viewBox="0 0 14 12"><defs><linearGradient id="ab" x1="0" y1="0" x2="0" y2="1"><stop offset="0" stop-color="#fff8d8"/><stop offset="1" stop-color="#ffd058"/></linearGradient></defs><path d="M.6 6L6.500 .6V3.500H13.500V8.500H6.500V11.400Z" fill="url(#ab)" stroke="#d08c18" stroke-linejoin="round"/></svg>
<svg style="left:1593px;top:70px;" width="14" height="12" viewBox="0 0 14 12"><path d="M13.400 6L7.500 .6V3.500H.5V8.500H7.500V11.400Z" fill="#f4f3f0" stroke="#e0ded8" stroke-linejoin="round"/></svg>
<svg style="left:1616px;top:68px;" width="16" height="16" viewBox="0 0 16 16"><path d="M5.500 4.500L9 .8l.3 2.200c3 .2 5 2.500 4.300 5.500l-2.600.3c.6-1.800-.2-2.800-1.700-2.900l.2 2.100z" fill="#ffd860" stroke="#c88818" stroke-width=".9" stroke-linejoin="round"/><path d="M9 11.500L5.500 15.200l-.3-2.200c-3-.2-5-2.500-4.300-5.500l2.600-.3c-.6 1.800.2 2.800 1.700 2.900l-.2-2.100z" fill="#ffd860" stroke="#c88818" stroke-width=".9" stroke-linejoin="round"/></svg>
<div style="left:1641px;top:69px;width:10px;height:4px;border:1px solid #404040;background:#fff"></div>
<div style="left:1659px;top:69px;width:10px;height:10px;border:1px solid #404040;background:#fff"></div>
<div style="left:1660px;top:71px;width:8px;height:1px;background:#404040"></div>
<div style="left:1313px;top:90px;width:344px;height:91px;overflow:hidden;background:#fff">
<span class="vh1" style="left:5px;top:14px;font-size:18px;font-weight:bold;color:#0b63c8;line-height:22px;margin-top:-8px;letter-spacing:0.678px;transform:scaleX(1.1000);transform-origin:0 0;">GPIO</span>
</div>
<div style="left:1657px;top:90px;width:16px;height:60px;background:repeating-conic-gradient(#fff 0 25%,#d4d0c8 0 50%) 0 0/2px 2px"></div>
<div class="sbb" style="left:1657px;top:90px;width:16px;height:16px;"></div>
<svg style="left:1661px;top:96px;" width="7" height="4" viewBox="0 0 7 4"><path d="M0 4h7L3.500 0z" fill="#000"/></svg>
<div class="sbb" style="left:1657px;top:106px;width:16px;height:40px;"></div>
</div>
<div class="win" style="top:139px;height:885px">
<div style="left:0px;top:0px;width:1680px;height:18px;background:linear-gradient(90deg,#0a246a 0%,#a6caf0 100%)"></div>
<svg style="left:2px;top:1px;" width="16" height="16" viewBox="0 0 16 16"><defs><radialGradient id="og" cx=".45" cy=".5" r=".55"><stop offset="0" stop-color="#f4b400"/><stop offset=".45" stop-color="#d88420"/><stop offset="1" stop-color="#c06018"/></radialGradient><linearGradient id="og2" x1="0" y1="0" x2="0" y2="1"><stop offset="0" stop-color="#fff" stop-opacity=".35"/><stop offset=".5" stop-color="#fff" stop-opacity="0"/></linearGradient></defs><circle cx="8" cy="8" r="7.800" fill="url(#og)"/><circle cx="8" cy="8" r="7.800" fill="url(#og2)"/><path d="M5.800 3h4.400v1.200H9.200v7.600h1v1.200H5.800v-1.200h1V4.200h-1z" fill="#fff"/></svg>
<span class="ttl" style="left:19px;top:3px;color:#fff;font-weight:bold;letter-spacing:0.418px;">CooCox CoIDE --- C:/CooCox/CoIDE/workspace/Example_GPIO/Example_GPIO.coproj</span>
<div class="btn" style="left:1628px;top:2px;width:16px;height:14px;"></div>
<div class="btn" style="left:1644px;top:2px;width:16px;height:14px;"></div>
<div class="btn" style="left:1662px;top:2px;width:16px;height:14px;"></div>
<div style="left:1632px;top:11px;width:6px;height:2px;background:#000"></div>
<svg style="left:1647px;top:4px;" width="8" height="9" viewBox="0 0 8 9"><path d="M2 0h6v6h-2v-1h1v-3h-4v1h-1zM0 3h6v6h-6zM1 5v3h4v-3z" fill="#000" fill-rule="evenodd"/></svg>
<svg style="left:1666px;top:5px;" width="8" height="7" viewBox="0 0 8 7"><path d="M0 0h2l2 2.500L6 0h2L5 3.500 8 7H6L4 4.500 2 7H0l3-3.500z" fill="#000"/></svg>
<span class="menu" style="left:5px;top:22px;;letter-spacing:-0.312px;"><u>F</u>ile</span>
<span class="menu" style="left:33px;top:22px;;letter-spacing:-0.117px;"><u>E</u>dit</span>
<span class="menu" style="left:63px;top:22px;;letter-spacing:-0.289px;"><u>V</u>iew</span>
<span class="menu" style="left:97px;top:22px;;letter-spacing:-0.036px;"><u>P</u>roject</span>
<span class="menu" style="left:143px;top:22px;;letter-spacing:-0.284px;"><u>F</u>lash</span>
<span class="menu" style="left:180px;top:22px;;letter-spacing:-0.188px;"><u>D</u>ebug</span>
<span class="menu" style="left:223px;top:22px;;letter-spacing:-0.229px;"><u>S</u>earch</span>
<span class="menu" style="left:268px;top:22px;;letter-spacing:-0.285px;"><u>H</u>elp</span>
<div style="left:294px;top:28px;width:2px;height:1px;background:#a0a0a0"></div>
<div style="left:4px;top:42px;width:2px;height:18px;background:#fff"></div>
<div style="left:6px;top:42px;width:1px;height:18px;background:#808080"></div>
<div style="left:89px;top:42px;width:2px;height:18px;background:#fff"></div>
<div style="left:91px;top:42px;width:1px;height:18px;background:#808080"></div>
<div style="left:238px;top:42px;width:2px;height:18px;background:#fff"></div>
<div style="left:240px;top:42px;width:1px;height:18px;background:#808080"></div>
<div style="left:299px;top:42px;width:2px;height:18px;background:#fff"></div>
<div style="left:301px;top:42px;width:1px;height:18px;background:#808080"></div>
<div style="left:336px;top:42px;width:2px;height:18px;background:#fff"></div>
<div style="left:338px;top:42px;width:1px;height:18px;background:#808080"></div>
<div style="left:397px;top:42px;width:2px;height:18px;background:#fff"></div>
<div style="left:399px;top:42px;width:1px;height:18px;background:#808080"></div>
<div style="left:447px;top:42px;width:2px;height:18px;background:#fff"></div>
<div style="left:449px;top:42px;width:1px;height:18px;background:#808080"></div>
<div style="left:147px;top:42px;width:1px;height:18px;background:#808080"></div>
<div style="left:148px;top:42px;width:1px;height:18px;background:#fff"></div>
<div style="left:179px;top:42px;width:1px;height:18px;background:#808080"></div>
<div style="left:180px;top:42px;width:1px;height:18px;background:#fff"></div>
<svg style="left:16px;top:43px;" width="16" height="16" viewBox="0 0 16 16"><defs><linearGradient id="nwg" x1="0" y1="0" x2="1" y2="1"><stop offset="0" stop-color="#fff"/><stop offset="1" stop-color="#c8ecff"/></linearGradient></defs><rect x=".5" y="2.500" width="13" height="12" fill="url(#nwg)" stroke="#505050"/><rect x="1" y="3" width="12" height="2" fill="#606060"/><path d="M12.500 6c1 4-2 7.500-6 8" fill="none" stroke="#f0d060" stroke-width="1.100"/><path d="M12 0v6M9 3h6" stroke="#c89020" stroke-width="1.800"/><path d="M12 1v4M10 3h4" stroke="#fff4c0" stroke-width=".7"/></svg>
<svg style="left:40px;top:43px;" width="16" height="16" viewBox="0 0 16 16"><path d="M2.500 1.500h6l3 3v10h-9z" fill="#fff" stroke="#9ab0d8"/><path d="M8.500 1.500v3h3z" fill="#e0cc98" stroke="#c8b078" stroke-width=".7"/><path d="M4 5.500h3M4 7.500h6M4 9.500h6M4 11.500h6M4 13h5" stroke="#6888c8" stroke-width=".9"/></svg>
<svg style="left:63px;top:43px;" width="16" height="16" viewBox="0 0 16 16"><rect x="1.5" y="1.5" width="13" height="13" fill="#e4e2dc" stroke="#b8b4ac"/><rect x="4" y="2" width="8" height="5" fill="#f4f4f2" stroke="#c0bcb4" stroke-width=".6"/><rect x="4.5" y="9.5" width="7" height="5" fill="#d0ccc4" stroke="#b8b4ac"/><rect x="6" y="11" width="2" height="3" fill="#f0f0ee"/></svg>
<svg style="left:100px;top:43px;" width="16" height="16" viewBox="0 0 16 16"><rect x="1.5" y="7.5" width="13" height="7" fill="#fff" stroke="#000"/><path d="M3 10.5h10M3 12.5h10" stroke="#000" stroke-dasharray="1 1"/><path d="M5 3v4M11 3v4" stroke="#1030c0" stroke-width="1.6"/><path d="M2.5 5.5l2.5 3 2.5-3zM8.500 5.5l2.500 3 2.500-3z" fill="#1030c0"/><path d="M2 1.500h12M3 3.500h10" stroke="#2040c0" stroke-dasharray="1 1.500"/></svg>
<svg style="left:124px;top:43px;" width="16" height="16" viewBox="0 0 16 16"><rect x="1.5" y="8.5" width="13" height="6" fill="#fff" stroke="#000"/><path d="M3 10.5h10M3 12.5h10" stroke="#000" stroke-dasharray="1 1"/><path d="M5 3v4M11 3v4" stroke="#1030c0" stroke-width="1.6"/><path d="M2.500 5.500l2.500 3 2.500-3zM8.500 5.500l2.500 3 2.500-3z" fill="#1030c0"/><path d="M3 1.500h10M2 3.500h3M11 3.500h3" stroke="#2040c0" stroke-dasharray="1 1.500"/></svg>
<svg style="left:156px;top:43px;" width="16" height="16" viewBox="0 0 16 16"><path d="M4.500 6L1 3.500M4 9H.5M5 12l-2.500 3.500M11 5.500L14.500 3M12 8.500h3.500M11.500 11.500l3 2.500M6 3.500L4.500 .5M8.500 3L10 .5" stroke="#101828" stroke-width="1.100" fill="none"/><ellipse cx="8" cy="9" rx="3.700" ry="4.800" transform="rotate(-25 8 9)" fill="#8cc4e4" stroke="#183048"/><ellipse cx="9" cy="10" rx="1.500" ry="2.600" transform="rotate(-25 9 10)" fill="#e0f4fc"/><circle cx="6.300" cy="4.300" r="1.800" fill="#182838"/></svg>
<svg style="left:188px;top:43px;" width="16" height="16" viewBox="0 0 16 16"><rect x="1" y="11" width="14" height="4" rx="1.5" fill="#20c020" stroke="#1030a0"/><path d="M5 5v4M11 5v4" stroke="#1030c0" stroke-width="1.6"/><path d="M2.500 7.500l2.500 3 2.500-3zM8.500 7.500l2.500 3 2.500-3z" fill="#1030c0"/><path d="M2 1.500h12M3 3.500h10M4 5.500h1M7 5.500h2M11 5.500h1" stroke="#d02020" stroke-dasharray="1 1.500"/></svg>
<svg style="left:213px;top:43px;" width="16" height="16" viewBox="0 0 16 16"><path d="M4.500 9.500l7-7 3.500 3.500-7 7z" fill="#fff" stroke="#202020"/><path d="M6 10l6-6M7.500 11.500l6-6M6.500 8l3.500 3.500M8.500 6L12 9.500M10.500 4L14 7.500" stroke="#606060" stroke-width=".7"/><path d="M11.500 2.500L13 .8l2.300 2.300L13.500 4.500" fill="#909090" stroke="#202020"/><path d="M.5 14.500h1.200M2.500 13h1.200M4.500 12h1.200M1.500 11.500h1.200M3.500 14.500h1.200M5.500 14h1.200M.5 12.500h1.200M3 10.500h1.200" stroke="#1030c0" stroke-width="1.200"/></svg>
<svg style="left:249px;top:43px;" width="16" height="16" viewBox="0 0 16 16"><path d="M8 .8l1.200 0 .5 2 1.300.6 1.800-1 1 1-1 1.800.6 1.300 2 .5v1.600l-2 .5-.6 1.300 1 1.800-1 1-1.800-1-1.300.6-.5 2H6.800l-.5-2L5 13.300l-1.800 1-1-1 1-1.800-.6-1.300-2-.5V8.100l2-.5.6-1.300-1-1.800 1-1 1.800 1 1.300-.6.500-2z" fill="#e4ecf6" stroke="#a8bcd8" stroke-width=".8"/><circle cx="8" cy="8.400" r="2.700" fill="#d4d0c8" stroke="#a8b8d0" stroke-width=".9"/></svg>
<svg style="left:273px;top:43px;" width="16" height="16" viewBox="0 0 16 16"><rect x="2.500" y="2.500" width="11" height="11" rx="3" fill="#eef2fa" stroke="#a8b8d8"/><path d="M8 5l3 3-3 3-3-3z" fill="#fff" stroke="#a8b8d8" stroke-width=".9"/><path d="M8 .8v1.700M8 13.500v1.700M.8 8h1.700M13.500 8h1.700" stroke="#90a4cc" stroke-width="2"/><path d="M2.500 2.500l1 1M13.500 2.500l-1 1M2.500 13.500l1-1M13.500 13.500l-1-1" stroke="#a8b8d8" stroke-dasharray="1 1"/></svg>
<svg style="left:310px;top:43px;" width="16" height="16" viewBox="0 0 16 16"><defs><linearGradient id="hmg" x1="0" y1="0" x2="0" y2="1"><stop offset="0" stop-color="#fff"/><stop offset="1" stop-color="#b8b8b8"/></linearGradient></defs><path d="M4 8v5.500q0 1.300 1.300 1.300h5.400q1.300 0 1.300-1.300V8L8 4.500z" fill="url(#hmg)" stroke="#c8c8c8" stroke-width=".6"/><path d="M1.200 8.300L8 1.800l6.800 6.500" fill="none" stroke="#2070e0" stroke-width="3" stroke-linejoin="miter" stroke-linecap="round"/><path d="M1.800 8L8 2.200 14.200 8" fill="none" stroke="#78b8ff" stroke-width="1"/></svg>
<svg style="left:348px;top:43px;" width="16" height="16" viewBox="0 0 16 16"><defs><linearGradient id="grg" x1="0" y1="0" x2="0" y2="1"><stop offset="0" stop-color="#b87c30"/><stop offset=".6" stop-color="#b08040"/><stop offset="1" stop-color="#8090b0"/></linearGradient></defs><rect x=".5" y=".5" width="12" height="12" fill="#fff" stroke="url(#grg)"/><rect x="1" y="9" width="11" height="3" fill="#dce8fc"/><path d="M4.500 .5v12M8.500 .5v12" stroke="url(#grg)"/><path d="M.5 4.500h12" stroke="#b48038"/><path d="M.5 8.500h12" stroke="#a08860"/><rect x="9" y="9" width="7" height="7" fill="#d4d0c8"/><rect x="10.500" y="10.500" width="4" height="4" fill="#dce8fc" stroke="#6880b0"/></svg>
<svg style="left:371px;top:43px;" width="16" height="16" viewBox="0 0 16 16"><circle cx="8" cy="8" r="7.400" fill="#e0f0f8" stroke="#807868" stroke-dasharray="2.500 1.200"/><circle cx="8.500" cy="4.800" r="2.600" fill="#18a0e8"/><circle cx="4.500" cy="9.800" r="2.600" fill="#e8c010"/><circle cx="10.800" cy="10.500" r="2.600" fill="#10c020"/><circle cx="8.500" cy="4.800" r="1" fill="#60e8ff"/><circle cx="4.500" cy="9.800" r="1" fill="#fff0a0"/><circle cx="10.800" cy="10.500" r="1" fill="#90ff98"/></svg>
<svg style="left:408px;top:43px;" width="16" height="16" viewBox="0 0 16 16"><path d="M.5 15.500L1.800 10.500 5.500 14.200Z" fill="#fff8d8" stroke="#f0e0a0" stroke-width=".6"/><path d="M3.600 12.400L7.800 8.200" stroke="#888078" stroke-width="5.400"/><path d="M7.800 8.200L12.600 3.400" stroke="#e8a030" stroke-width="5.400" stroke-linecap="round"/><path d="M8 7L12.500 2.500" stroke="#ffd890" stroke-width="1.600" stroke-linecap="round"/><circle cx="11.500" cy="4.500" r=".8" fill="#3050a0"/></svg>
<svg style="left:432px;top:50px;" width="5" height="3" viewBox="0 0 5 3"><path d="M0 0h5L2.500 3z" fill="#000"/></svg>
<svg style="left:457px;top:43px;" width="16" height="16" viewBox="0 0 16 16"><path d="M6.500 3.500h7v11h-8v-3" fill="#f2f1ee" stroke="#c8c4bc"/><path d="M8 6.500h4M8 8.500h4M8 10.500h4M8 12.500h4" stroke="#c0c8d8"/><path d="M2.500 .5h4v5.500h2.500l-4.500 5-4.500-5h2.500z" fill="#e6e4de" stroke="#b4b0a8" stroke-linejoin="round"/><rect x="2" y="12.500" width="3" height="2" fill="#a8b4cc"/></svg>
<svg style="left:484px;top:51px;" width="5" height="3" viewBox="0 0 5 3"><path d="M0 0h5L2.500 3z" fill="#fff"/></svg>
<svg style="left:483px;top:50px;" width="5" height="3" viewBox="0 0 5 3"><path d="M0 0h5L2.500 3z" fill="#808080"/></svg>
<svg style="left:494px;top:43px;" width="16" height="16" viewBox="0 0 16 16"><path d="M3.500 .5h9v11h-5" fill="#f2f1ee" stroke="#c8c4bc"/><path d="M7 3.500h4M7 5.500h4M7 7.500h4" stroke="#c0c8d8"/><rect x="4" y="1.500" width="3" height="2" fill="#a8b4cc"/><path d="M2.500 15.500h4v-5.500h2.500l-4.500-5-4.500 5h2.500z" fill="#e6e4de" stroke="#b4b0a8" stroke-linejoin="round"/></svg>
<svg style="left:521px;top:51px;" width="5" height="3" viewBox="0 0 5 3"><path d="M0 0h5L2.500 3z" fill="#fff"/></svg>
<svg style="left:520px;top:50px;" width="5" height="3" viewBox="0 0 5 3"><path d="M0 0h5L2.500 3z" fill="#808080"/></svg>
<svg style="left:535px;top:45px;" width="14" height="12" viewBox="0 0 14 12"><defs><linearGradient id="ab" x1="0" y1="0" x2="0" y2="1"><stop offset="0" stop-color="#fff8d8"/><stop offset="1" stop-color="#ffd058"/></linearGradient></defs><path d="M.6 6L6.500 .6V3.500H13.500V8.500H6.500V11.400Z" fill="url(#ab)" stroke="#d08c18" stroke-linejoin="round"/></svg>
<svg style="left:531px;top:44px;" width="6" height="6" viewBox="0 0 6 6"><path d="M3 0v6M.5 1.200l5 3.600M5.500 1.200l-5 3.600" stroke="#2040a0" stroke-width=".9"/></svg>
<svg style="left:557px;top:45px;" width="14" height="12" viewBox="0 0 14 12"><defs><linearGradient id="ab" x1="0" y1="0" x2="0" y2="1"><stop offset="0" stop-color="#fff8d8"/><stop offset="1" stop-color="#ffd058"/></linearGradient></defs><path d="M.6 6L6.500 .6V3.500H13.500V8.500H6.500V11.400Z" fill="url(#ab)" stroke="#d08c18" stroke-linejoin="round"/></svg>
<svg style="left:580px;top:50px;" width="5" height="3" viewBox="0 0 5 3"><path d="M0 0h5L2.500 3z" fill="#000"/></svg>
<svg style="left:594px;top:45px;" width="14" height="12" viewBox="0 0 14 12"><path d="M13.400 6L7.500 .6V3.500H.5V8.500H7.500V11.400Z" fill="#f4f3f0" stroke="#e0ded8" stroke-linejoin="round"/></svg>
<svg style="left:618px;top:51px;" width="5" height="3" viewBox="0 0 5 3"><path d="M0 0h5L2.500 3z" fill="#fff"/></svg>
<svg style="left:617px;top:50px;" width="5" height="3" viewBox="0 0 5 3"><path d="M0 0h5L2.500 3z" fill="#808080"/></svg>
<div style="left:4px;top:64px;width:367px;height:237px;border:1px solid #808080;border-radius:7px 7px 0 0;background:#d4d0c8"></div>
<svg style="left:4px;top:64px;" width="136" height="24" viewBox="0 0 136 24"><defs><linearGradient id="tg4_64" x1="0" y1="0" x2="0" y2="1"><stop offset="0" stop-color="#fff"/><stop offset="1" stop-color="#d4d0c8"/></linearGradient></defs><path d="M0 23V6Q0 0 6 0H100C112 0 114 23 134 23Z" fill="url(#tg4_64)"/><path d="M.5 24V7Q.5 .5 7 .5H100C112 .5 114 23.500 134 23.500" fill="none" stroke="#808080"/></svg>
<div style="left:138px;top:87px;width:232px;height:1px;background:#808080"></div>
<div style="left:7px;top:90px;width:361px;height:208px;background:#fff"></div>
<svg style="left:10px;top:70px;" width="12" height="12" viewBox="0 0 12 12"><defs><linearGradient id="ctg" x1="0" y1="0" x2="0" y2="1"><stop offset="0" stop-color="#d8f0ff"/><stop offset="1" stop-color="#fff"/></linearGradient><linearGradient id="cts" x1="0" y1="0" x2="0" y2="1"><stop offset="0" stop-color="#b09848"/><stop offset="1" stop-color="#5870a0"/></linearGradient></defs><rect x=".5" y=".5" width="11" height="11" fill="url(#ctg)" stroke="url(#cts)"/><rect x="0" y="0" width="12" height="3" fill="#1c68c8"/><rect x="1" y="1" width="10" height="1" fill="#88c0f8"/><path d="M0 11.500h12" stroke="#5870a0"/></svg>
<span class="tab" style="left:27.5px;top:71px;;letter-spacing:-0.237px;">Components</span>
<svg style="left:96px;top:71px;" width="10" height="10" viewBox="0 0 10 10"><path d="M.5 .5H3L5 2.500 7 .5H9.500V3L7.500 5 9.500 7V9.500H7L5 7.500 3 9.500H.5V7L2.500 5 .5 3Z" fill="#fff" stroke="#000" stroke-width="1"/></svg>
<div style="left:336px;top:69px;width:10px;height:4px;border:1px solid #404040;background:#fff"></div>
<div style="left:354px;top:69px;width:10px;height:10px;border:1px solid #404040;background:#fff"></div>
<div style="left:355px;top:71px;width:8px;height:1px;background:#404040"></div>
<div style="left:7px;top:90px;width:361px;height:21px;background:linear-gradient(#fff,#dfe8f6)"></div>
<div style="left:7px;top:111px;width:361px;height:1px;background:#a4c0e4"></div>
<span style="left:14px;top:94px;;letter-spacing:-0.188px;">Device</span>
<span class="org" style="left:60.5px;top:94px;;letter-spacing:-0.222px;">[ STM32F103C8 ]</span>
<div style="left:19px;top:125px;width:1px;height:76px;background:repeating-linear-gradient(180deg,#808080 0 1px,transparent 1px 2px)"></div>
<div style="left:38px;top:127px;width:1px;height:10px;background:repeating-linear-gradient(180deg,#808080 0 1px,transparent 1px 2px)"></div>
<div style="left:38px;top:159px;width:1px;height:26px;background:repeating-linear-gradient(180deg,#808080 0 1px,transparent 1px 2px)"></div>
<div style="left:38px;top:207px;width:1px;height:10px;background:repeating-linear-gradient(180deg,#808080 0 1px,transparent 1px 2px)"></div>
<div style="left:15px;top:116px;width:9px;height:9px;border:1px solid #808080;background:#fff"></div>
<div style="left:17px;top:120px;width:5px;height:1px;background:#000"></div>
<div style="left:25px;top:120px;width:4px;height:1px;background:repeating-linear-gradient(90deg,#808080 0 1px,transparent 1px 2px)"></div>
<span style="left:30px;top:114px;;letter-spacing:-0.035px;">Boot</span>
<div style="left:38px;top:136px;width:9px;height:1px;background:repeating-linear-gradient(90deg,#808080 0 1px,transparent 1px 2px)"></div>
<svg style="left:52px;top:132px;" width="9" height="9" viewBox="0 0 9 9"><circle cx="4.500" cy="4.500" r="3.900" fill="#6cb87c" stroke="#2a9a4a" stroke-width="1.100"/><circle cx="4.500" cy="4.500" r="2" fill="#90c898"/></svg>
<span style="left:65px;top:130px;;letter-spacing:-0.409px;">CMSIS_Boot</span>
<span class="blue" style="left:130px;top:130px;;letter-spacing:-0.013px;">(with 1 example)</span>
<div style="left:15px;top:148px;width:9px;height:9px;border:1px solid #808080;background:#fff"></div>
<div style="left:17px;top:152px;width:5px;height:1px;background:#000"></div>
<div style="left:25px;top:152px;width:4px;height:1px;background:repeating-linear-gradient(90deg,#808080 0 1px,transparent 1px 2px)"></div>
<span style="left:30px;top:146px;;letter-spacing:-0.213px;">Peripheral.ST</span>
<div style="left:38px;top:168px;width:9px;height:1px;background:repeating-linear-gradient(90deg,#808080 0 1px,transparent 1px 2px)"></div>
<svg style="left:52px;top:164px;" width="9" height="9" viewBox="0 0 9 9"><circle cx="4.500" cy="4.500" r="3.900" fill="#6cb87c" stroke="#2a9a4a" stroke-width="1.100"/><circle cx="4.500" cy="4.500" r="2" fill="#90c898"/></svg>
<span style="left:65px;top:162px;;letter-spacing:-0.781px;">RCC</span>
<span class="blue" style="left:92px;top:162px;;letter-spacing:-0.041px;">(with 7 examples)</span>
<div style="left:38px;top:184px;width:9px;height:1px;background:repeating-linear-gradient(90deg,#808080 0 1px,transparent 1px 2px)"></div>
<svg style="left:52px;top:180px;" width="9" height="9" viewBox="0 0 9 9"><circle cx="4.500" cy="4.500" r="3.900" fill="#6cb87c" stroke="#2a9a4a" stroke-width="1.100"/><circle cx="4.500" cy="4.500" r="2" fill="#90c898"/></svg>
<span style="left:65px;top:178px;;letter-spacing:-0.629px;">GPIO</span>
<span class="blue" style="left:96px;top:178px;;letter-spacing:-0.046px;">(with 13 examples)</span>
<div style="left:15px;top:196px;width:9px;height:9px;border:1px solid #808080;background:#fff"></div>
<div style="left:17px;top:200px;width:5px;height:1px;background:#000"></div>
<div style="left:25px;top:200px;width:4px;height:1px;background:repeating-linear-gradient(90deg,#808080 0 1px,transparent 1px 2px)"></div>
<span style="left:30px;top:194px;;letter-spacing:-0.521px;">Common</span>
<div style="left:38px;top:216px;width:9px;height:1px;background:repeating-linear-gradient(90deg,#808080 0 1px,transparent 1px 2px)"></div>
<svg style="left:52px;top:212px;" width="9" height="9" viewBox="0 0 9 9"><circle cx="4.500" cy="4.500" r="3.900" fill="#6cb87c" stroke="#2a9a4a" stroke-width="1.100"/><circle cx="4.500" cy="4.500" r="2" fill="#90c898"/></svg>
<span style="left:65px;top:210px;;letter-spacing:-0.430px;">CMSIS core</span>
<span class="blue" style="left:126px;top:210px;;letter-spacing:-0.041px;">(with 9 examples)</span>
<div style="left:374px;top:64px;width:933px;height:645px;border:1px solid #808080;border-radius:7px 7px 0 0;background:#d4d0c8"></div>
<div style="left:375px;top:88px;width:931px;height:620px;background:#9ba7cc"></div>
<div style="left:377px;top:90px;width:927px;height:616px;background:#fff"></div>
<div style="left:375px;top:87px;width:274px;height:1px;background:#808080"></div>
<svg style="left:378px;top:68px;" width="16" height="16" viewBox="0 0 16 16"><circle cx="8" cy="8" r="7.400" fill="#e0f0f8" stroke="#807868" stroke-dasharray="2.500 1.200"/><circle cx="8.500" cy="4.800" r="2.600" fill="#18a0e8"/><circle cx="4.500" cy="9.800" r="2.600" fill="#e8c010"/><circle cx="10.800" cy="10.500" r="2.600" fill="#10c020"/><circle cx="8.500" cy="4.800" r="1" fill="#60e8ff"/><circle cx="4.500" cy="9.800" r="1" fill="#fff0a0"/><circle cx="10.800" cy="10.500" r="1" fill="#90ff98"/></svg>
<span class="tab" style="left:397px;top:71px;;letter-spacing:-0.344px;">welcome</span>
<svg style="left:461px;top:65px;" width="8" height="22" viewBox="0 0 8 22"><path d="M7.500 0C4 2 4.500 14 4.500 22" fill="none" stroke="#808080"/></svg>
<svg style="left:470px;top:68px;" width="16" height="16" viewBox="0 0 16 16"><defs><linearGradient id="grg" x1="0" y1="0" x2="0" y2="1"><stop offset="0" stop-color="#b87c30"/><stop offset=".6" stop-color="#b08040"/><stop offset="1" stop-color="#8090b0"/></linearGradient></defs><rect x=".5" y=".5" width="12" height="12" fill="#fff" stroke="url(#grg)"/><rect x="1" y="9" width="11" height="3" fill="#dce8fc"/><path d="M4.500 .5v12M8.500 .5v12" stroke="url(#grg)"/><path d="M.5 4.500h12" stroke="#b48038"/><path d="M.5 8.500h12" stroke="#a08860"/><rect x="9" y="9" width="7" height="7" fill="#d4d0c8"/><rect x="10.500" y="10.500" width="4" height="4" fill="#dce8fc" stroke="#6880b0"/></svg>
<span class="tab" style="left:488px;top:71px;;letter-spacing:-0.008px;">Repository</span>
<svg style="left:563px;top:65px;" width="8" height="22" viewBox="0 0 8 22"><path d="M7.500 0C4 2 4.500 14 4.500 22" fill="none" stroke="#808080"/></svg>
<svg style="left:574px;top:69px;" width="11" height="14" viewBox="0 0 11 14"><defs><linearGradient id="cfg" x1="0" y1="0" x2="1" y2="1"><stop offset="0" stop-color="#fff"/><stop offset="1" stop-color="#e4ecfa"/></linearGradient></defs><path d="M.5 .5H7L10.500 4V13.500H.5Z" fill="url(#cfg)" stroke="#a89050"/><path d="M7 .5V4H10.500Z" fill="#ecdcb0" stroke="#a89050" stroke-width=".8"/><text x="3.300" y="11.300" font-family="Liberation Sans" font-weight="bold" font-size="10.500" fill="#2070a8">c</text><rect x="1.800" y="9.800" width="1.600" height="1.600" fill="#2070a8"/></svg>
<span class="tab" style="left:590px;top:71px;;letter-spacing:-0.234px;">main.c</span>
<svg style="left:648px;top:64px;" width="140" height="24" viewBox="0 0 140 24"><defs><linearGradient id="ag1" x1="0" y1="0" x2="0" y2="1"><stop offset="0" stop-color="#eef0f8"/><stop offset=".7" stop-color="#9ba7cc"/><stop offset="1" stop-color="#9ba7cc"/></linearGradient></defs><path d="M0 23V6Q0 0 6 0H102C114 0 118 23 138 23V24H0Z" fill="url(#ag1)"/><path d="M.5 23V6Q.5 .5 6 .5H102C114 .5 118 23.500 138 23.500" fill="none" stroke="#808080"/></svg>
<svg style="left:652px;top:69px;" width="15" height="15" viewBox="0 0 16 16"><path d="M8 .8l1.200 0 .5 2 1.300.6 1.800-1 1 1-1 1.800.6 1.300 2 .5v1.600l-2 .5-.6 1.300 1 1.800-1 1-1.800-1-1.300.6-.5 2H6.800l-.5-2L5 13.300l-1.800 1-1-1 1-1.800-.6-1.300-2-.5V8.100l2-.5.6-1.300-1-1.800 1-1 1.800 1 1.300-.6.500-2z" fill="#f4f8fc" stroke="#b4c8e0" stroke-width=".8"/><circle cx="8" cy="8.400" r="2.700" fill="#b8c4dc" stroke="#a8b8d0" stroke-width=".9"/></svg>
<span class="tab" style="left:671px;top:71px;;letter-spacing:0.005px;">Configuration</span>
<div style="left:786px;top:87px;width:520px;height:1px;background:#808080"></div>
<svg style="left:745px;top:71px;" width="10" height="10" viewBox="0 0 10 10"><path d="M.5 .5H3L5 2.500 7 .5H9.500V3L7.500 5 9.500 7V9.500H7L5 7.500 3 9.500H.5V7L2.500 5 .5 3Z" fill="#fff" stroke="#000" stroke-width="1"/></svg>
<div style="left:1272px;top:69px;width:10px;height:4px;border:1px solid #404040;background:#fff"></div>
<div style="left:1290px;top:69px;width:10px;height:10px;border:1px solid #404040;background:#fff"></div>
<div style="left:1291px;top:71px;width:8px;height:1px;background:#404040"></div>
<div style="left:377px;top:90px;width:911px;height:32px;background:linear-gradient(#fff 0%,#fff 20%,#e4e6f2 100%)"></div>
<div style="left:377px;top:122px;width:911px;height:1px;background:#b0b8dc"></div>
<span class="h19" style="left:382px;top:104px;font-size:18px;color:#0a246a;line-height:22px;margin-top:-8px;letter-spacing:0.340px;">Configuration</span>
<div style="left:1288px;top:90px;width:16px;height:616px;background:repeating-conic-gradient(#fff 0 25%,#d4d0c8 0 50%) 0 0/2px 2px"></div>
<div class="sbb" style="left:1288px;top:90px;width:16px;height:16px;"></div>
<svg style="left:1292px;top:96px;" width="7" height="4" viewBox="0 0 7 4"><path d="M0 4h7L3.500 0z" fill="#000"/></svg>
<div class="sbb" style="left:1288px;top:106px;width:16px;height:578px;"></div>
<div class="sbb" style="left:1288px;top:690px;width:16px;height:16px;"></div>
<svg style="left:1292px;top:696px;" width="7" height="4" viewBox="0 0 7 4"><path d="M0 0h7L3.500 4z" fill="#000"/></svg>
<div style="left:383px;top:135px;width:899px;height:21px;background:#d4d0c8"></div>
<div style="left:385px;top:137px;width:43px;height:18px;border:1px solid;border-color:#fff #404040 transparent #fff;border-radius:2px 2px 0 0;box-shadow:inset -1px 0 0 #808080"></div>
<span style="left:390px;top:141px;;letter-spacing:-0.188px;">Device</span>
<div style="left:429px;top:137px;width:47px;height:18px;border:1px solid;border-color:#fff transparent transparent #fff;border-radius:2px 2px 0 0"></div>
<span style="left:434.5px;top:141px;;letter-spacing:-0.480px;">Compile</span>
<span style="left:483px;top:139px;;letter-spacing:-0.297px;">Link</span>
<div style="left:476px;top:137px;width:1px;height:18px;background:#fff"></div>
<div style="left:521px;top:136px;width:1px;height:20px;background:#404040"></div>
<div style="left:520px;top:137px;width:1px;height:19px;background:#808080"></div>
<div style="left:522px;top:137px;width:43px;height:18px;border:1px solid;border-color:#fff #404040 transparent #fff;border-radius:2px 2px 0 0;box-shadow:inset -1px 0 0 #808080"></div>
<span style="left:525px;top:141px;;letter-spacing:0.161px;">Output</span>
<div style="left:567px;top:137px;width:40px;height:18px;border:1px solid;border-color:#fff #404040 transparent #fff;border-radius:2px 2px 0 0;box-shadow:inset -1px 0 0 #808080"></div>
<span style="left:571.5px;top:141px;;letter-spacing:-0.434px;">User</span>
<div style="left:609px;top:137px;width:57px;height:18px;border:1px solid;border-color:#fff #404040 transparent #fff;border-radius:2px 2px 0 0;box-shadow:inset -1px 0 0 #808080"></div>
<span style="left:613px;top:141px;;letter-spacing:-0.166px;">Debugger</span>
<div style="left:668px;top:137px;width:57px;height:18px;border:1px solid;border-color:#fff #404040 transparent #fff;border-radius:2px 2px 0 0;box-shadow:inset -1px 0 0 #808080"></div>
<span style="left:672px;top:141px;;letter-spacing:-0.178px;">Download</span>
<div style="left:384px;top:156px;width:898px;height:544px;background:#fff;border-style:solid;border-color:#d4d0c8 #404040 #404040 #d4d0c8;border-width:1px 1px 1px 3px;box-shadow:inset -1px -1px 0 #808080, inset -3px -3px 0 #d4d0c8"></div>
<div style="left:387px;top:157px;width:891px;height:24px;border:1px solid #b4c0dc;border-bottom:none;border-radius:3px 3px 0 0;background:#fff"></div>
<div style="left:389px;top:159px;width:887px;height:21px;background:linear-gradient(#e2e6f1,#fff)"></div>
<div style="left:387px;top:165px;width:1px;height:18px;background:linear-gradient(#b4c0dc,#fff)"></div>
<div style="left:1277px;top:165px;width:1px;height:18px;background:linear-gradient(#b4c0dc,#fff)"></div>
<span style="left:392.5px;top:161px;font-weight:bold;color:#0a246a;letter-spacing:0.094px;">Link</span>
<div class="grp" style="left:395px;top:185px;width:434px;height:185px;"></div>
<div style="left:401px;top:184px;width:41px;height:3px;background:#fff"></div>
<span style="left:403.5px;top:181px;;letter-spacing:-0.132px;">Options</span>
<div style="left:403px;top:198px;width:223px;height:16px;background:#d4d0c8"></div>
<div class="sunk" style="left:404px;top:200px;width:11px;height:11px;background:#fff"></div>
<svg style="left:406px;top:202px;" width="7" height="7" viewBox="0 0 7 7"><path d="M.5 2v3M1.500 3v3M2.500 4v3M3.500 3v3M4.500 2v3M5.500 1v3M6.500 0v3" stroke="#000" shape-rendering="crispEdges"/></svg>
<span style="left:420.5px;top:200px;;letter-spacing:-0.179px;">Use Memory Layout from Memory Window</span>
<div style="left:403px;top:219px;width:136px;height:16px;background:#d4d0c8"></div>
<div class="sunk" style="left:404px;top:221px;width:11px;height:11px;background:#fff"></div>
<svg style="left:406px;top:223px;" width="7" height="7" viewBox="0 0 7 7"><path d="M.5 2v3M1.500 3v3M2.500 4v3M3.500 3v3M4.500 2v3M5.500 1v3M6.500 0v3" stroke="#000" shape-rendering="crispEdges"/></svg>
<span style="left:420.5px;top:221px;;letter-spacing:-0.232px;">Discard unused sections</span>
<div style="left:403px;top:240px;width:228px;height:16px;background:#d4d0c8"></div>
<div class="sunk" style="left:404px;top:242px;width:11px;height:11px;background:#fff"></div>
<svg style="left:406px;top:244px;" width="7" height="7" viewBox="0 0 7 7"><path d="M.5 2v3M1.500 3v3M2.500 4v3M3.500 3v3M4.500 2v3M5.500 1v3M6.500 0v3" stroke="#000" shape-rendering="crispEdges"/></svg>
<span style="left:420.5px;top:242px;;letter-spacing:-0.013px;">Don't use the standard system startup files</span>
<div style="left:403px;top:261px;width:75px;height:16px;background:#d4d0c8"></div>
<div class="sunk" style="left:404px;top:263px;width:11px;height:11px;background:#fff"></div>
<span style="left:420.5px;top:263px;;letter-spacing:-0.419px;">Enable LTO</span>
<span style="left:407px;top:292px;;letter-spacing:0.039px;">Library:</span>
<div class="sunk" style="left:456px;top:288px;width:118px;height:19px;background:#fff"></div>
<span style="left:458px;top:292px;;letter-spacing:-0.123px;">Not use C Library</span>
<div class="sbb" style="left:557px;top:290px;width:16px;height:16px;"></div>
<svg style="left:562px;top:296px;" width="7" height="4" viewBox="0 0 7 4"><path d="M0 0h7L3.500 4z" fill="#000"/></svg>
<div style="left:455px;top:308px;width:120px;height:54px;border:1px solid #000;background:#fff"></div>
<span style="left:457.5px;top:310px;;letter-spacing:-0.153px;">Not use C Library</span>
<div style="left:456px;top:322px;width:118px;height:13px;background:#0a246a;outline:1px dotted #d8d8a0;outline-offset:-1px"></div>
<span style="left:457.5px;top:323px;color:#fff;letter-spacing:-0.231px;">Use base C Library</span>
<span style="left:457.5px;top:336px;;letter-spacing:-0.322px;">Semihosting</span>
<span style="left:457.5px;top:349px;;letter-spacing:0.037px;">Retarget</span>
<div class="grp" style="left:835px;top:185px;width:434px;height:185px;"></div>
<div style="left:841px;top:184px;width:77px;height:3px;background:#fff"></div>
<span style="left:843.5px;top:181px;;letter-spacing:-0.291px;">Linked Libraries</span>
<div class="sunk" style="left:844px;top:199px;width:316px;height:163px;background:#fff"></div>
<div style="left:1171px;top:198px;width:51px;height:23px;background:#d4d0c8;border:1px solid #000;box-shadow:inset 0 0 0 1px #fff"></div>
<span style="left:1187px;top:203px;;letter-spacing:-0.526px;">Add</span>
<div style="left:1171px;top:226px;width:51px;height:23px;background:#d4d0c8;border:1px solid #000;box-shadow:inset 0 0 0 1px #fff"></div>
<span style="left:1177px;top:231px;color:#808080;text-shadow:1px 1px 0 #fff;;letter-spacing:-0.328px;">Remove</span>
<div class="grp" style="left:395px;top:382px;width:874px;height:139px;"></div>
<div style="left:401px;top:381px;width:73px;height:3px;background:#fff"></div>
<span style="left:403.5px;top:378px;;letter-spacing:-0.160px;">Memory Areas</span>
<div class="grp" style="left:403px;top:401px;width:424px;height:81px;"></div>
<div style="left:409px;top:400px;width:121px;height:3px;background:#fff"></div>
<span style="left:411.5px;top:397px;;letter-spacing:-0.095px;">Read/only Memory Area</span>
<div class="grp" style="left:837px;top:401px;width:424px;height:81px;"></div>
<div style="left:843px;top:400px;width:125px;height:3px;background:#fff"></div>
<span style="left:845.5px;top:397px;;letter-spacing:-0.048px;">Read/write Memory Area</span>
<span style="left:410.5px;top:415px;;letter-spacing:-0.154px;">on-chip</span>
<span style="left:531.5px;top:415px;;letter-spacing:0.153px;">Start</span>
<span style="left:720.5px;top:415px;;letter-spacing:-0.602px;">Size</span>
<span style="left:844.5px;top:415px;;letter-spacing:-0.154px;">on-chip</span>
<span style="left:965.5px;top:415px;;letter-spacing:0.153px;">Start</span>
<span style="left:1155px;top:415px;;letter-spacing:-0.602px;">Size</span>
<span style="left:410.5px;top:436px;;letter-spacing:-0.569px;">IROM1</span>
<span style="left:410.5px;top:460px;;letter-spacing:-0.469px;">IROM2</span>
<span style="left:844.5px;top:436px;;letter-spacing:-0.425px;">IRAM1</span>
<span style="left:844.5px;top:460px;;letter-spacing:-0.325px;">IRAM2</span>
<div class="sunk" style="left:457px;top:433px;width:174px;height:16px;background:#fff"></div>
<span style="left:461.5px;top:436px;;letter-spacing:-0.056px;">0x08000000</span>
<div class="sunk" style="left:457px;top:457px;width:174px;height:16px;background:#fff"></div>
<div class="sunk" style="left:643px;top:433px;width:175px;height:16px;background:#fff"></div>
<span style="left:647.5px;top:436px;;letter-spacing:-0.056px;">0x00010000</span>
<div class="sunk" style="left:643px;top:457px;width:175px;height:16px;background:#fff"></div>
<div class="sunk" style="left:891px;top:433px;width:175px;height:16px;background:#fff"></div>
<span style="left:895.5px;top:436px;;letter-spacing:-0.056px;">0x20000000</span>
<div class="sunk" style="left:891px;top:457px;width:175px;height:16px;background:#fff"></div>
<div class="sunk" style="left:1078px;top:433px;width:175px;height:16px;background:#fff"></div>
<span style="left:1082.5px;top:436px;;letter-spacing:-0.056px;">0x00005000</span>
<div class="sunk" style="left:1078px;top:457px;width:175px;height:16px;background:#fff"></div>
<svg style="left:409px;top:494px;" width="12" height="12" viewBox="0 0 12 12"><circle cx="6" cy="6" r="5.500" fill="#fff" stroke="#808080"/><path d="M2.200 9.800A5.500 5.500 0 0 1 9.800 2.200" fill="none" stroke="#404040" stroke-width="1.200"/><path d="M9.800 2.200A5.500 5.500 0 0 1 2.200 9.800" fill="none" stroke="#e8e6e0" stroke-width="1.200"/><circle cx="6" cy="6" r="2" fill="#000"/></svg>
<span style="left:425.5px;top:495px;;letter-spacing:-0.286px;">Debug in Flash</span>
<svg style="left:505px;top:494px;" width="12" height="12" viewBox="0 0 12 12"><circle cx="6" cy="6" r="5.500" fill="#fff" stroke="#808080"/><path d="M2.200 9.800A5.500 5.500 0 0 1 9.800 2.200" fill="none" stroke="#404040" stroke-width="1.200"/><path d="M9.800 2.200A5.500 5.500 0 0 1 2.200 9.800" fill="none" stroke="#e8e6e0" stroke-width="1.200"/></svg>
<span style="left:521px;top:495px;;letter-spacing:-0.337px;">Debug in RAM</span>
<div class="grp" style="left:395px;top:533px;width:874px;height:43px;"></div>
<div style="left:401px;top:532px;width:59px;height:3px;background:#fff"></div>
<span style="left:403.5px;top:529px;;letter-spacing:-0.137px;">Scatter File</span>
<div class="sunk" style="left:404px;top:550px;width:753px;height:15px;background:#efefef"></div>
<div style="left:1168px;top:546px;width:24px;height:23px;background:#d4d0c8;border:1px solid #000;box-shadow:inset 0 0 0 1px #fff"></div>
<span style="left:1168px;top:551px;width:24px;text-align:center;color:#808080;text-shadow:1px 1px 0 #fff;">...</span>
<div style="left:1202px;top:546px;width:30px;height:23px;background:#d4d0c8;border:1px solid #000;box-shadow:inset 0 0 0 1px #fff"></div>
<span style="left:1202px;top:551px;width:30px;text-align:center;color:#808080;text-shadow:1px 1px 0 #fff;">Edit</span>
<div class="grp" style="left:395px;top:588px;width:874px;height:39px;"></div>
<div style="left:401px;top:587px;width:67px;height:3px;background:#fff"></div>
<span style="left:403.5px;top:584px;;letter-spacing:-0.317px;">Misc Controls</span>
<div class="sunk" style="left:404px;top:602px;width:807px;height:16px;background:#fff"></div>
<div class="grp" style="left:395px;top:639px;width:874px;height:51px;"></div>
<div style="left:401px;top:638px;width:101px;height:3px;background:#fff"></div>
<span style="left:403.5px;top:635px;;letter-spacing:-0.156px;">Linker Control String</span>
<div class="sunk" style="left:404px;top:654px;width:807px;height:27px;background:#efefef"></div>
<span style="left:408.5px;top:656px;;letter-spacing:0.003px;">-mcpu=cortex-m3;</span>
<span style="left:502px;top:656px;;letter-spacing:-0.246px;">-mthumb;</span>
<span style="left:551px;top:656px;;letter-spacing:-0.281px;">-g;</span>
<span style="left:568px;top:656px;;letter-spacing:0.041px;">-nostartfiles;</span>
<span style="left:633px;top:656px;;letter-spacing:-0.246px;">-Map=Example_GPIO.map;</span>
<span style="left:767.5px;top:656px;;letter-spacing:-0.352px;">-O0;</span>
<span style="left:791px;top:656px;;letter-spacing:-0.038px;">--gc-sections;</span>
<span style="left:861px;top:656px;;letter-spacing:-0.081px;">-L${linkdir};</span>
<span style="left:919.5px;top:656px;;letter-spacing:-0.041px;">-T${linkdir}/arm-gcc-link.ld;</span>
<div class="sbb" style="left:1195px;top:654px;width:16px;height:13px;"></div>
<svg style="left:1199px;top:658px;" width="7" height="4" viewBox="0 0 7 4"><path d="M0 4h7L3.500 0z" fill="#808080"/></svg>
<div class="sbb" style="left:1195px;top:667px;width:16px;height:14px;"></div>
<svg style="left:1199px;top:672px;" width="7" height="4" viewBox="0 0 7 4"><path d="M0 0h7L3.500 4z" fill="#808080"/></svg>
<div style="left:1310px;top:64px;width:366px;height:645px;border:1px solid #808080;border-radius:7px 7px 0 0;background:#d4d0c8"></div>
<svg style="left:1310px;top:64px;" width="98" height="24" viewBox="0 0 98 24"><defs><linearGradient id="tg1310_64" x1="0" y1="0" x2="0" y2="1"><stop offset="0" stop-color="#fff"/><stop offset="1" stop-color="#d4d0c8"/></linearGradient></defs><path d="M0 23V6Q0 0 6 0H62C74 0 76 23 96 23Z" fill="url(#tg1310_64)"/><path d="M.5 24V7Q.5 .5 7 .5H62C74 .5 76 23.500 96 23.500" fill="none" stroke="#808080"/></svg>
<div style="left:1406px;top:87px;width:269px;height:1px;background:#808080"></div>
<div style="left:1313px;top:90px;width:360px;height:616px;background:#fff"></div>
<svg style="left:1315px;top:68px;" width="16" height="16" viewBox="0 0 16 16"><circle cx="3.800" cy="2.800" r="2.200" fill="#a8c4e8" stroke="#5888c8" stroke-width=".8"/><path d="M1.500 14.500V8.500L.5 8V6.500Q2 5 4 5.500L6 6.500V14.500Z" fill="#b8d0ec" stroke="#4878b8" stroke-width=".8"/><circle cx="9.500" cy="8.500" r="5.300" fill="#f4faff" stroke="#2060b0" stroke-width="1.400"/><path d="M7.800 7.200c0-2.300 3.600-2.300 3.600 0 0 1.400-1.800 1.400-1.800 2.600" fill="none" stroke="#2058a8" stroke-width="1.500"/><rect x="8.900" y="10.800" width="1.500" height="1.400" fill="#2058a8"/></svg>
<span class="tab" style="left:1333px;top:71px;;letter-spacing:-0.281px;">Help</span>
<svg style="left:1363px;top:71px;" width="10" height="10" viewBox="0 0 10 10"><path d="M.5 .5H3L5 2.500 7 .5H9.500V3L7.500 5 9.500 7V9.500H7L5 7.500 3 9.500H.5V7L2.500 5 .5 3Z" fill="#fff" stroke="#000" stroke-width="1"/></svg>
<svg style="left:1569px;top:70px;" width="14" height="12" viewBox="0 0 14 12"><defs><linearGradient id="ab" x1="0" y1="0" x2="0" y2="1"><stop offset="0" stop-color="#fff8d8"/><stop offset="1" stop-color="#ffd058"/></linearGradient></defs><path d="M.6 6L6.500 .6V3.500H13.500V8.500H6.500V11.400Z" fill="url(#ab)" stroke="#d08c18" stroke-linejoin="round"/></svg>
<svg style="left:1593px;top:70px;" width="14" height="12" viewBox="0 0 14 12"><path d="M13.400 6L7.500 .6V3.500H.5V8.500H7.500V11.400Z" fill="#f4f3f0" stroke="#e0ded8" stroke-linejoin="round"/></svg>
<svg style="left:1616px;top:68px;" width="16" height="16" viewBox="0 0 16 16"><path d="M5.500 4.500L9 .8l.3 2.200c3 .2 5 2.500 4.300 5.500l-2.600.3c.6-1.800-.2-2.800-1.700-2.900l.2 2.100z" fill="#ffd860" stroke="#c88818" stroke-width=".9" stroke-linejoin="round"/><path d="M9 11.500L5.500 15.200l-.3-2.200c-3-.2-5-2.500-4.300-5.500l2.600-.3c-.6 1.800.2 2.800 1.700 2.900l-.2-2.100z" fill="#ffd860" stroke="#c88818" stroke-width=".9" stroke-linejoin="round"/></svg>
<div style="left:1641px;top:69px;width:10px;height:4px;border:1px solid #404040;background:#fff"></div>
<div style="left:1659px;top:69px;width:10px;height:10px;border:1px solid #404040;background:#fff"></div>
<div style="left:1660px;top:71px;width:8px;height:1px;background:#404040"></div>
<div style="left:1313px;top:90px;width:344px;height:601px;overflow:hidden;background:#fff">
<span class="vh1" style="left:5px;top:14px;font-size:18px;font-weight:bold;color:#0b63c8;line-height:22px;margin-top:-8px;letter-spacing:0.678px;transform:scaleX(1.1000);transform-origin:0 0;">GPIO</span>
<span class="vh2" style="left:5px;top:49px;font-size:13px;font-weight:bold;color:#0b63c8;line-height:15px;margin-top:-2px;letter-spacing:0.612px;transform:scaleX(1.1000);transform-origin:0 0;">Overview</span>
<span class="vp" style="left:5px;top:72px;;letter-spacing:0.366px;transform:scaleX(1.1000);transform-origin:0 0;">Each Port have 16 pins, each I/O port bit is freely</span>
<span class="vp" style="left:5px;top:85px;;letter-spacing:0.450px;transform:scaleX(1.1000);transform-origin:0 0;">programmable to modes as follows: Input floating, Input</span>
<span class="vp" style="left:5px;top:98px;;letter-spacing:0.419px;transform:scaleX(1.1000);transform-origin:0 0;">pull-up, Input pull-down, Analog Input, Output open-drain,</span>
<span class="vp" style="left:5px;top:111px;;letter-spacing:0.336px;transform:scaleX(1.1000);transform-origin:0 0;">Output push-pull, Alternate function push-pull and</span>
<span class="vp" style="left:5px;top:124px;;letter-spacing:0.324px;transform:scaleX(1.1000);transform-origin:0 0;">Alternate function open-drain. All GPIOs are APB2</span>
<span class="vp" style="left:5px;top:137px;;letter-spacing:0.408px;transform:scaleX(1.1000);transform-origin:0 0;">peripheral. In output mode, it is possible to modify only</span>
<span class="vp" style="left:5px;top:150px;;letter-spacing:0.332px;transform:scaleX(1.1000);transform-origin:0 0;">one or several bits in a single atomic APB2 write access.</span>
<span class="vp" style="left:5px;top:163px;;letter-spacing:0.315px;transform:scaleX(1.1000);transform-origin:0 0;">This component can be used to set pins mode and speed,</span>
<span class="vp" style="left:5px;top:176px;;letter-spacing:0.333px;transform:scaleX(1.1000);transform-origin:0 0;">to input and output, to set pins as Event output or EXTI</span>
<span class="vp" style="left:5px;top:189px;;letter-spacing:0.343px;transform:scaleX(1.1000);transform-origin:0 0;">Line, to remap the pin, to selects the Ethernet media</span>
<span class="vp" style="left:5px;top:202px;;letter-spacing:0.293px;transform:scaleX(1.1000);transform-origin:0 0;">interface, tp lock GPIO Pins configuration.</span>
<span class="vh2" style="left:5px;top:226px;font-size:13px;font-weight:bold;color:#0b63c8;line-height:15px;margin-top:-2px;letter-spacing:0.317px;transform:scaleX(1.1000);transform-origin:0 0;">API Reference</span>
<div style="left:5px;top:248px;width:334px;height:400px;border:1px solid #c0c0c0;border-bottom:none"></div>
<div style="left:202px;top:248px;width:1px;height:400px;background:#c0c0c0"></div>
<div style="left:5px;top:248px;width:334px;height:1px;background:#c0c0c0"></div>
<span class="vl" style="left:10px;top:254px;color:#1a1aff;text-decoration:underline;letter-spacing:0.281px;transform:scaleX(1.1000);transform-origin:0 0;">GPIO_DeInit</span>
<span class="vd" style="left:207px;top:254px;;letter-spacing:0.254px;transform:scaleX(1.1000);transform-origin:0 0;">Deinitializes the</span>
<span class="vd" style="left:207px;top:267px;;letter-spacing:0.285px;transform:scaleX(1.1000);transform-origin:0 0;">GPIOx peripheral</span>
<span class="vd" style="left:207px;top:280px;;letter-spacing:0.416px;transform:scaleX(1.1000);transform-origin:0 0;">registers to their</span>
<span class="vd" style="left:207px;top:293px;;letter-spacing:0.355px;transform:scaleX(1.1000);transform-origin:0 0;">default reset values.</span>
<div style="left:5px;top:309px;width:334px;height:1px;background:#c0c0c0"></div>
<span class="vl" style="left:10px;top:315px;color:#1a1aff;text-decoration:underline;letter-spacing:0.192px;transform:scaleX(1.1000);transform-origin:0 0;">GPIO_AFIODeInit</span>
<span class="vd" style="left:207px;top:315px;;letter-spacing:0.254px;transform:scaleX(1.1000);transform-origin:0 0;">Deinitializes the</span>
<span class="vd" style="left:207px;top:328px;;letter-spacing:0.227px;transform:scaleX(1.1000);transform-origin:0 0;">Alternate Functions</span>
<span class="vd" style="left:207px;top:341px;;letter-spacing:0.462px;transform:scaleX(1.1000);transform-origin:0 0;">(remap, event control</span>
<span class="vd" style="left:207px;top:354px;;letter-spacing:0.120px;transform:scaleX(1.1000);transform-origin:0 0;">and EXTI</span>
<span class="vd" style="left:207px;top:367px;;letter-spacing:0.336px;transform:scaleX(1.1000);transform-origin:0 0;">configuration)</span>
<span class="vd" style="left:207px;top:380px;;letter-spacing:0.416px;transform:scaleX(1.1000);transform-origin:0 0;">registers to their</span>
<span class="vd" style="left:207px;top:393px;;letter-spacing:0.355px;transform:scaleX(1.1000);transform-origin:0 0;">default reset values.</span>
<div style="left:5px;top:409px;width:334px;height:1px;background:#c0c0c0"></div>
<span class="vl" style="left:10px;top:415px;color:#1a1aff;text-decoration:underline;letter-spacing:0.290px;transform:scaleX(1.1000);transform-origin:0 0;">GPIO_Init</span>
<span class="vd" style="left:207px;top:415px;;letter-spacing:0.298px;transform:scaleX(1.1000);transform-origin:0 0;">Initializes the GPIOx</span>
<span class="vd" style="left:207px;top:428px;;letter-spacing:0.312px;transform:scaleX(1.1000);transform-origin:0 0;">peripheral according</span>
<span class="vd" style="left:207px;top:441px;;letter-spacing:0.290px;transform:scaleX(1.1000);transform-origin:0 0;">to the specified</span>
<span class="vd" style="left:207px;top:454px;;letter-spacing:0.365px;transform:scaleX(1.1000);transform-origin:0 0;">parameters in the</span>
<span class="vd" style="left:207px;top:467px;;letter-spacing:0.278px;transform:scaleX(1.1000);transform-origin:0 0;">GPIO_InitStruct.</span>
<div style="left:5px;top:483px;width:334px;height:1px;background:#c0c0c0"></div>
<span class="vl" style="left:10px;top:489px;color:#1a1aff;text-decoration:underline;letter-spacing:0.319px;transform:scaleX(1.1000);transform-origin:0 0;">GPIO_StructInit</span>
<span class="vd" style="left:207px;top:489px;;letter-spacing:0.035px;transform:scaleX(1.1000);transform-origin:0 0;">Fills each</span>
<span class="vd" style="left:207px;top:502px;;letter-spacing:0.289px;transform:scaleX(1.1000);transform-origin:0 0;">GPIO_InitStruct</span>
<span class="vd" style="left:207px;top:515px;;letter-spacing:0.410px;transform:scaleX(1.1000);transform-origin:0 0;">member with its</span>
<span class="vd" style="left:207px;top:528px;;letter-spacing:0.358px;transform:scaleX(1.1000);transform-origin:0 0;">default value.</span>
<div style="left:5px;top:544px;width:334px;height:1px;background:#c0c0c0"></div>
<span class="vl" style="left:10px;top:550px;color:#1a1aff;text-decoration:underline;letter-spacing:0.237px;transform:scaleX(1.1000);transform-origin:0 0;">GPIO_ReadInputDataBit</span>
<span class="vd" style="left:207px;top:550px;;letter-spacing:0.202px;transform:scaleX(1.1000);transform-origin:0 0;">Reads the specified</span>
<span class="vd" style="left:207px;top:563px;;letter-spacing:0.374px;transform:scaleX(1.1000);transform-origin:0 0;">input port pin.</span>
<div style="left:5px;top:579px;width:334px;height:1px;background:#c0c0c0"></div>
<span class="vl" style="left:10px;top:585px;color:#1a1aff;text-decoration:underline;letter-spacing:0.208px;transform:scaleX(1.1000);transform-origin:0 0;">GPIO_ReadInputData</span>
<span class="vd" style="left:207px;top:585px;;letter-spacing:0.202px;transform:scaleX(1.1000);transform-origin:0 0;">Reads the specified</span>
<span class="vd" style="left:207px;top:598px;;letter-spacing:0.243px;transform:scaleX(1.1000);transform-origin:0 0;">input data port.</span>
</div>
<div style="left:1657px;top:90px;width:16px;height:600px;background:repeating-conic-gradient(#fff 0 25%,#d4d0c8 0 50%) 0 0/2px 2px"></div>
<div class="sbb" style="left:1657px;top:90px;width:16px;height:16px;"></div>
<svg style="left:1661px;top:96px;" width="7" height="4" viewBox="0 0 7 4"><path d="M0 4h7L3.500 0z" fill="#000"/></svg>
<div class="sbb" style="left:1657px;top:106px;width:16px;height:380px;"></div>
<div class="sbb" style="left:1657px;top:674px;width:16px;height:16px;"></div>
<svg style="left:1661px;top:680px;" width="7" height="4" viewBox="0 0 7 4"><path d="M0 0h7L3.500 4z" fill="#000"/></svg>
<div style="left:1313px;top:690px;width:344px;height:16px;background:repeating-conic-gradient(#fff 0 25%,#d4d0c8 0 50%) 0 0/2px 2px"></div>
<div class="sbb" style="left:1313px;top:690px;width:16px;height:16px;"></div>
<svg style="left:1318px;top:694px;" width="4" height="7" viewBox="0 0 4 7"><path d="M4 0v7L0 3.500z" fill="#000"/></svg>
<div class="sbb" style="left:1329px;top:690px;width:298px;height:16px;"></div>
<div class="sbb" style="left:1641px;top:690px;width:16px;height:16px;"></div>
<svg style="left:1647px;top:694px;" width="4" height="7" viewBox="0 0 4 7"><path d="M0 0v7L4 3.500z" fill="#000"/></svg>
<div style="left:1657px;top:690px;width:16px;height:16px;background:#d4d0c8"></div>
<div style="left:4px;top:304px;width:367px;height:405px;border:1px solid #808080;border-radius:7px 7px 0 0;background:#d4d0c8"></div>
<svg style="left:4px;top:304px;" width="109" height="24" viewBox="0 0 109 24"><defs><linearGradient id="tg4_304" x1="0" y1="0" x2="0" y2="1"><stop offset="0" stop-color="#fff"/><stop offset="1" stop-color="#d4d0c8"/></linearGradient></defs><path d="M0 23V6Q0 0 6 0H73C85 0 87 23 107 23Z" fill="url(#tg4_304)"/><path d="M.5 24V7Q.5 .5 7 .5H73C85 .5 87 23.500 107 23.500" fill="none" stroke="#808080"/></svg>
<div style="left:111px;top:327px;width:259px;height:1px;background:#808080"></div>
<div style="left:7px;top:330px;width:361px;height:376px;background:#fff"></div>
<svg style="left:9px;top:308px;" width="16" height="16" viewBox="0 0 16 16"><defs><linearGradient id="ptg" x1="0" y1="0" x2="0" y2="1"><stop offset="0" stop-color="#fff4c0"/><stop offset="1" stop-color="#f8c050"/></linearGradient></defs><path d="M.5 .5h5.500l2.500 2.500v8.500h-8z" fill="#fff" stroke="#b0a070"/><path d="M6 .5v2.500h2.500z" fill="#e8d8a8" stroke="#b0a070" stroke-width=".7"/><path d="M2 3.500h2M2 5.500h3M2 7.500h2M2 9.500h1.500" stroke="#88a0d8"/><path d="M4.500 14.500V7Q4.500 5.500 6 5.500H7.500Q8.500 5.500 9 6.500H13Q14.500 6.500 14.500 8V14.500Z" fill="url(#ptg)" stroke="#d08020"/></svg>
<span class="tab" style="left:27.5px;top:311px;;letter-spacing:-0.107px;">Project</span>
<svg style="left:70px;top:311px;" width="10" height="10" viewBox="0 0 10 10"><path d="M.5 .5H3L5 2.500 7 .5H9.500V3L7.500 5 9.500 7V9.500H7L5 7.500 3 9.500H.5V7L2.500 5 .5 3Z" fill="#fff" stroke="#000" stroke-width="1"/></svg>
<svg style="left:271px;top:310px;" width="14" height="14" viewBox="0 0 14 14"><defs><linearGradient id="clg" x1="0" y1="0" x2="0" y2="1"><stop offset="0" stop-color="#fff"/><stop offset="1" stop-color="#d4e4fa"/></linearGradient></defs><rect x=".5" y=".5" width="10" height="10" fill="#e8f0fc" stroke="#b8c8e0"/><rect x="2.500" y="2.500" width="10" height="10" fill="url(#clg)" stroke="#90a4d0"/><path d="M4.500 7.500h6.500" stroke="#104890" stroke-width="1.200"/></svg>
<svg style="left:293px;top:308px;" width="16" height="16" viewBox="0 0 16 16"><path d="M.6 4.500l4.400-4v3h7.500v2H5v3z" fill="#ffe488" stroke="#d09020" stroke-width=".9" stroke-linejoin="round"/><path d="M15.400 11.500l-4.400-4v3H3.500v2H11v3z" fill="#ffe488" stroke="#d09020" stroke-width=".9" stroke-linejoin="round"/></svg>
<svg style="left:317px;top:309px;" width="10" height="6" viewBox="0 0 10 6"><path d="M.5 .5h9L5 5.500z" fill="#fff" stroke="#404040" stroke-width=".9"/></svg>
<div style="left:336px;top:309px;width:10px;height:4px;border:1px solid #404040;background:#fff"></div>
<div style="left:354px;top:309px;width:10px;height:10px;border:1px solid #404040;background:#fff"></div>
<div style="left:355px;top:311px;width:8px;height:1px;background:#404040"></div>
<div style="left:7px;top:330px;width:361px;height:25px;background:linear-gradient(#fff,#dfe8f6)"></div>
<div style="left:7px;top:355px;width:361px;height:1px;background:#a4c0e4"></div>
<span style="left:15px;top:337px;;letter-spacing:0.070px;">Target</span>
<div class="sunk" style="left:56px;top:332px;width:305px;height:20px;background:#efefef"></div>
<span style="left:59.5px;top:337px;font-size:13px;line-height:15px;margin-top:-2px;letter-spacing:-0.611px;">Example_GPIO</span>
<div class="sbb" style="left:344px;top:333px;width:16px;height:18px;"></div>
<svg style="left:349px;top:340px;" width="7" height="4" viewBox="0 0 7 4"><path d="M0 0h7L3.500 4z" fill="#000"/></svg>
<div style="left:37px;top:373px;width:1px;height:281px;background:repeating-linear-gradient(180deg,#808080 0 1px,transparent 1px 2px)"></div>
<div style="left:56px;top:390px;width:1px;height:43px;background:repeating-linear-gradient(180deg,#808080 0 1px,transparent 1px 2px)"></div>
<div style="left:56px;top:458px;width:1px;height:94px;background:repeating-linear-gradient(180deg,#808080 0 1px,transparent 1px 2px)"></div>
<div style="left:75px;top:475px;width:1px;height:9px;background:repeating-linear-gradient(180deg,#808080 0 1px,transparent 1px 2px)"></div>
<div style="left:56px;top:578px;width:1px;height:59px;background:repeating-linear-gradient(180deg,#808080 0 1px,transparent 1px 2px)"></div>
<div style="left:75px;top:595px;width:1px;height:25px;background:repeating-linear-gradient(180deg,#808080 0 1px,transparent 1px 2px)"></div>
<div style="left:14px;top:360px;width:9px;height:9px;border:1px solid #808080;background:#fff"></div>
<div style="left:16px;top:364px;width:5px;height:1px;background:#000"></div>
<div style="left:48px;top:357px;width:78px;height:16px;background:#d4d0c8"></div>
<svg style="left:29px;top:357px;" width="16" height="13" viewBox="0 0 16 13"><path d="M2.500 9V3.500Q2.500 1.500 4.500 1.500H7Q8.500 1.500 9 3.500H10.500V8" fill="#fbe098" stroke="#d0a048"/><path d="M1.500 12.500L4.500 7.500H15.500L11.500 12.500Z" fill="#88c0f0" stroke="#2848c0" stroke-linejoin="round"/><path d="M1.500 12.500V4.500" stroke="#2848c0"/><path d="M5 8.500H14" stroke="#c0e4ff"/><text x="10" y="6.500" font-family="Liberation Sans" font-weight="bold" font-size="8.500" fill="#1868a0">C</text></svg>
<span style="left:49.5px;top:359px;;letter-spacing:-0.452px;">Example_GPIO</span>
<div style="left:33px;top:377px;width:9px;height:9px;border:1px solid #808080;background:#fff"></div>
<div style="left:35px;top:381px;width:5px;height:1px;background:#000"></div>
<div style="left:43px;top:381px;width:5px;height:1px;background:repeating-linear-gradient(90deg,#808080 0 1px,transparent 1px 2px)"></div>
<svg style="left:49px;top:376px;" width="15" height="13" viewBox="0 0 15 13"><defs><linearGradient id="fdg" x1="0" y1="0" x2="1" y2="1"><stop offset="0" stop-color="#fff4c8"/><stop offset="1" stop-color="#f0b048"/></linearGradient></defs><path d="M.5 11.500V2.500Q.5 .5 2.500 .5H4.500Q6 .5 6.500 2.500H11.500V11.500Z" fill="url(#fdg)" stroke="#c88838"/><path d="M1.500 10.500L4.500 5.500H11" fill="none" stroke="#d09848" stroke-width=".9"/><rect x="8.500" y="6.500" width="6" height="6" fill="#eef2fa" stroke="#203878"/><path d="M9 12.500H14.500V7" fill="none" stroke="#8090c0"/></svg>
<span style="left:68.5px;top:376px;;letter-spacing:-0.622px;">cmsis</span>
<div style="left:58px;top:398px;width:10px;height:1px;background:repeating-linear-gradient(90deg,#808080 0 1px,transparent 1px 2px)"></div>
<svg style="left:70px;top:391px;" width="11" height="14" viewBox="0 0 11 14"><defs><linearGradient id="cfg" x1="0" y1="0" x2="1" y2="1"><stop offset="0" stop-color="#fff"/><stop offset="1" stop-color="#e4ecfa"/></linearGradient></defs><path d="M.5 .5H7L10.500 4V13.500H.5Z" fill="url(#cfg)" stroke="#a89050"/><path d="M7 .5V4H10.500Z" fill="#ecdcb0" stroke="#a89050" stroke-width=".8"/><text x="3.300" y="11.300" font-family="Liberation Sans" font-weight="bold" font-size="10.500" fill="#2070a8">c</text><rect x="1.800" y="9.800" width="1.600" height="1.600" fill="#2070a8"/></svg>
<span style="left:87.5px;top:393px;;letter-spacing:-0.148px;">core_cm3.h</span>
<div style="left:57px;top:415px;width:11px;height:1px;background:repeating-linear-gradient(90deg,#808080 0 1px,transparent 1px 2px)"></div>
<svg style="left:70px;top:408px;" width="11" height="14" viewBox="0 0 11 14"><defs><linearGradient id="cfg" x1="0" y1="0" x2="1" y2="1"><stop offset="0" stop-color="#fff"/><stop offset="1" stop-color="#e4ecfa"/></linearGradient></defs><path d="M.5 .5H7L10.500 4V13.500H.5Z" fill="url(#cfg)" stroke="#a89050"/><path d="M7 .5V4H10.500Z" fill="#ecdcb0" stroke="#a89050" stroke-width=".8"/><text x="3.300" y="11.300" font-family="Liberation Sans" font-weight="bold" font-size="10.500" fill="#2070a8">c</text><rect x="1.800" y="9.800" width="1.600" height="1.600" fill="#2070a8"/></svg>
<span style="left:87.5px;top:410px;;letter-spacing:-0.255px;">core_cmFunc.h</span>
<div style="left:58px;top:432px;width:10px;height:1px;background:repeating-linear-gradient(90deg,#808080 0 1px,transparent 1px 2px)"></div>
<svg style="left:70px;top:425px;" width="11" height="14" viewBox="0 0 11 14"><defs><linearGradient id="cfg" x1="0" y1="0" x2="1" y2="1"><stop offset="0" stop-color="#fff"/><stop offset="1" stop-color="#e4ecfa"/></linearGradient></defs><path d="M.5 .5H7L10.500 4V13.500H.5Z" fill="url(#cfg)" stroke="#a89050"/><path d="M7 .5V4H10.500Z" fill="#ecdcb0" stroke="#a89050" stroke-width=".8"/><text x="3.300" y="11.300" font-family="Liberation Sans" font-weight="bold" font-size="10.500" fill="#2070a8">c</text><rect x="1.800" y="9.800" width="1.600" height="1.600" fill="#2070a8"/></svg>
<span style="left:87.5px;top:427px;;letter-spacing:0.026px;">core_cmInstr.h</span>
<div style="left:33px;top:445px;width:9px;height:9px;border:1px solid #808080;background:#fff"></div>
<div style="left:35px;top:449px;width:5px;height:1px;background:#000"></div>
<div style="left:43px;top:449px;width:5px;height:1px;background:repeating-linear-gradient(90deg,#808080 0 1px,transparent 1px 2px)"></div>
<svg style="left:49px;top:444px;" width="15" height="13" viewBox="0 0 15 13"><defs><linearGradient id="fdg" x1="0" y1="0" x2="1" y2="1"><stop offset="0" stop-color="#fff4c8"/><stop offset="1" stop-color="#f0b048"/></linearGradient></defs><path d="M.5 11.500V2.500Q.5 .5 2.500 .5H4.500Q6 .5 6.500 2.500H11.500V11.500Z" fill="url(#fdg)" stroke="#c88838"/><path d="M1.500 10.500L4.500 5.500H11" fill="none" stroke="#d09848" stroke-width=".9"/><rect x="8.500" y="6.500" width="6" height="6" fill="#eef2fa" stroke="#203878"/><path d="M9 12.500H14.500V7" fill="none" stroke="#8090c0"/></svg>
<span style="left:68.5px;top:444px;;letter-spacing:-0.264px;">cmsis_boot</span>
<div style="left:52px;top:462px;width:9px;height:9px;border:1px solid #808080;background:#fff"></div>
<div style="left:54px;top:466px;width:5px;height:1px;background:#000"></div>
<div style="left:62px;top:466px;width:5px;height:1px;background:repeating-linear-gradient(90deg,#808080 0 1px,transparent 1px 2px)"></div>
<svg style="left:68px;top:461px;" width="15" height="13" viewBox="0 0 15 13"><defs><linearGradient id="fdg" x1="0" y1="0" x2="1" y2="1"><stop offset="0" stop-color="#fff4c8"/><stop offset="1" stop-color="#f0b048"/></linearGradient></defs><path d="M.5 11.500V2.500Q.5 .5 2.500 .5H4.500Q6 .5 6.500 2.500H11.500V11.500Z" fill="url(#fdg)" stroke="#c88838"/><path d="M1.500 10.500L4.500 5.500H11" fill="none" stroke="#d09848" stroke-width=".9"/><rect x="8.500" y="6.500" width="6" height="6" fill="#eef2fa" stroke="#203878"/><path d="M9 12.500H14.500V7" fill="none" stroke="#8090c0"/></svg>
<span style="left:87.5px;top:461px;;letter-spacing:0.123px;">startup</span>
<div style="left:77px;top:483px;width:10px;height:1px;background:repeating-linear-gradient(90deg,#808080 0 1px,transparent 1px 2px)"></div>
<svg style="left:89px;top:476px;" width="11" height="14" viewBox="0 0 11 14"><defs><linearGradient id="cfg" x1="0" y1="0" x2="1" y2="1"><stop offset="0" stop-color="#fff"/><stop offset="1" stop-color="#e4ecfa"/></linearGradient></defs><path d="M.5 .5H7L10.500 4V13.500H.5Z" fill="url(#cfg)" stroke="#a89050"/><path d="M7 .5V4H10.500Z" fill="#ecdcb0" stroke="#a89050" stroke-width=".8"/><text x="3.300" y="11.300" font-family="Liberation Sans" font-weight="bold" font-size="10.500" fill="#2070a8">c</text><rect x="1.800" y="9.800" width="1.600" height="1.600" fill="#2070a8"/></svg>
<span style="left:106.5px;top:478px;;letter-spacing:0.025px;">startup_stm32f10x_md.c</span>
<div style="left:58px;top:500px;width:10px;height:1px;background:repeating-linear-gradient(90deg,#808080 0 1px,transparent 1px 2px)"></div>
<svg style="left:70px;top:493px;" width="11" height="14" viewBox="0 0 11 14"><defs><linearGradient id="cfg" x1="0" y1="0" x2="1" y2="1"><stop offset="0" stop-color="#fff"/><stop offset="1" stop-color="#e4ecfa"/></linearGradient></defs><path d="M.5 .5H7L10.500 4V13.500H.5Z" fill="url(#cfg)" stroke="#a89050"/><path d="M7 .5V4H10.500Z" fill="#ecdcb0" stroke="#a89050" stroke-width=".8"/><text x="3.300" y="11.300" font-family="Liberation Sans" font-weight="bold" font-size="10.500" fill="#2070a8">c</text><rect x="1.800" y="9.800" width="1.600" height="1.600" fill="#2070a8"/></svg>
<span style="left:87.5px;top:495px;;letter-spacing:0.072px;">stm32f10x_conf.h</span>
<div style="left:57px;top:517px;width:11px;height:1px;background:repeating-linear-gradient(90deg,#808080 0 1px,transparent 1px 2px)"></div>
<svg style="left:70px;top:510px;" width="11" height="14" viewBox="0 0 11 14"><defs><linearGradient id="cfg" x1="0" y1="0" x2="1" y2="1"><stop offset="0" stop-color="#fff"/><stop offset="1" stop-color="#e4ecfa"/></linearGradient></defs><path d="M.5 .5H7L10.500 4V13.500H.5Z" fill="url(#cfg)" stroke="#a89050"/><path d="M7 .5V4H10.500Z" fill="#ecdcb0" stroke="#a89050" stroke-width=".8"/><text x="3.300" y="11.300" font-family="Liberation Sans" font-weight="bold" font-size="10.500" fill="#2070a8">c</text><rect x="1.800" y="9.800" width="1.600" height="1.600" fill="#2070a8"/></svg>
<span style="left:87.5px;top:512px;;letter-spacing:0.098px;">stm32f10x.h</span>
<div style="left:58px;top:534px;width:10px;height:1px;background:repeating-linear-gradient(90deg,#808080 0 1px,transparent 1px 2px)"></div>
<svg style="left:70px;top:527px;" width="11" height="14" viewBox="0 0 11 14"><defs><linearGradient id="cfg" x1="0" y1="0" x2="1" y2="1"><stop offset="0" stop-color="#fff"/><stop offset="1" stop-color="#e4ecfa"/></linearGradient></defs><path d="M.5 .5H7L10.500 4V13.500H.5Z" fill="url(#cfg)" stroke="#a89050"/><path d="M7 .5V4H10.500Z" fill="#ecdcb0" stroke="#a89050" stroke-width=".8"/><text x="3.300" y="11.300" font-family="Liberation Sans" font-weight="bold" font-size="10.500" fill="#2070a8">c</text><rect x="1.800" y="9.800" width="1.600" height="1.600" fill="#2070a8"/></svg>
<span style="left:87.5px;top:529px;;letter-spacing:-0.043px;">system_stm32f10x.c</span>
<div style="left:57px;top:551px;width:11px;height:1px;background:repeating-linear-gradient(90deg,#808080 0 1px,transparent 1px 2px)"></div>
<svg style="left:70px;top:544px;" width="11" height="14" viewBox="0 0 11 14"><defs><linearGradient id="cfg" x1="0" y1="0" x2="1" y2="1"><stop offset="0" stop-color="#fff"/><stop offset="1" stop-color="#e4ecfa"/></linearGradient></defs><path d="M.5 .5H7L10.500 4V13.500H.5Z" fill="url(#cfg)" stroke="#a89050"/><path d="M7 .5V4H10.500Z" fill="#ecdcb0" stroke="#a89050" stroke-width=".8"/><text x="3.300" y="11.300" font-family="Liberation Sans" font-weight="bold" font-size="10.500" fill="#2070a8">c</text><rect x="1.800" y="9.800" width="1.600" height="1.600" fill="#2070a8"/></svg>
<span style="left:87.5px;top:546px;;letter-spacing:0.007px;">system_stm32f10x.h</span>
<div style="left:33px;top:564px;width:9px;height:9px;border:1px solid #808080;background:#fff"></div>
<div style="left:35px;top:568px;width:5px;height:1px;background:#000"></div>
<div style="left:44px;top:568px;width:4px;height:1px;background:repeating-linear-gradient(90deg,#808080 0 1px,transparent 1px 2px)"></div>
<svg style="left:49px;top:563px;" width="15" height="13" viewBox="0 0 15 13"><defs><linearGradient id="fdg" x1="0" y1="0" x2="1" y2="1"><stop offset="0" stop-color="#fff4c8"/><stop offset="1" stop-color="#f0b048"/></linearGradient></defs><path d="M.5 11.500V2.500Q.5 .5 2.500 .5H4.500Q6 .5 6.500 2.500H11.500V11.500Z" fill="url(#fdg)" stroke="#c88838"/><path d="M1.500 10.500L4.500 5.500H11" fill="none" stroke="#d09848" stroke-width=".9"/><rect x="8.500" y="6.500" width="6" height="6" fill="#eef2fa" stroke="#203878"/><path d="M9 12.500H14.500V7" fill="none" stroke="#8090c0"/></svg>
<span style="left:68.5px;top:563px;;letter-spacing:-0.335px;">stm_lib</span>
<div style="left:52px;top:581px;width:9px;height:9px;border:1px solid #808080;background:#fff"></div>
<div style="left:54px;top:585px;width:5px;height:1px;background:#000"></div>
<div style="left:63px;top:585px;width:4px;height:1px;background:repeating-linear-gradient(90deg,#808080 0 1px,transparent 1px 2px)"></div>
<svg style="left:68px;top:580px;" width="15" height="13" viewBox="0 0 15 13"><defs><linearGradient id="fdg" x1="0" y1="0" x2="1" y2="1"><stop offset="0" stop-color="#fff4c8"/><stop offset="1" stop-color="#f0b048"/></linearGradient></defs><path d="M.5 11.500V2.500Q.5 .5 2.500 .5H4.500Q6 .5 6.500 2.500H11.500V11.500Z" fill="url(#fdg)" stroke="#c88838"/><path d="M1.500 10.500L4.500 5.500H11" fill="none" stroke="#d09848" stroke-width=".9"/><rect x="8.500" y="6.500" width="6" height="6" fill="#eef2fa" stroke="#203878"/><path d="M9 12.500H14.500V7" fill="none" stroke="#8090c0"/></svg>
<span style="left:87.5px;top:580px;;letter-spacing:-0.354px;">inc</span>
<div style="left:76px;top:602px;width:11px;height:1px;background:repeating-linear-gradient(90deg,#808080 0 1px,transparent 1px 2px)"></div>
<svg style="left:89px;top:595px;" width="11" height="14" viewBox="0 0 11 14"><defs><linearGradient id="cfg" x1="0" y1="0" x2="1" y2="1"><stop offset="0" stop-color="#fff"/><stop offset="1" stop-color="#e4ecfa"/></linearGradient></defs><path d="M.5 .5H7L10.500 4V13.500H.5Z" fill="url(#cfg)" stroke="#a89050"/><path d="M7 .5V4H10.500Z" fill="#ecdcb0" stroke="#a89050" stroke-width=".8"/><text x="3.300" y="11.300" font-family="Liberation Sans" font-weight="bold" font-size="10.500" fill="#2070a8">c</text><rect x="1.800" y="9.800" width="1.600" height="1.600" fill="#2070a8"/></svg>
<span style="left:106.5px;top:597px;;letter-spacing:0.010px;">stm32f10x_gpio.h</span>
<div style="left:77px;top:619px;width:10px;height:1px;background:repeating-linear-gradient(90deg,#808080 0 1px,transparent 1px 2px)"></div>
<svg style="left:89px;top:612px;" width="11" height="14" viewBox="0 0 11 14"><defs><linearGradient id="cfg" x1="0" y1="0" x2="1" y2="1"><stop offset="0" stop-color="#fff"/><stop offset="1" stop-color="#e4ecfa"/></linearGradient></defs><path d="M.5 .5H7L10.500 4V13.500H.5Z" fill="url(#cfg)" stroke="#a89050"/><path d="M7 .5V4H10.500Z" fill="#ecdcb0" stroke="#a89050" stroke-width=".8"/><text x="3.300" y="11.300" font-family="Liberation Sans" font-weight="bold" font-size="10.500" fill="#2070a8">c</text><rect x="1.800" y="9.800" width="1.600" height="1.600" fill="#2070a8"/></svg>
<span style="left:106.5px;top:614px;;letter-spacing:0.020px;">stm32f10x_rcc.h</span>
<div style="left:52px;top:632px;width:9px;height:9px;border:1px solid #808080;background:#fff"></div>
<div style="left:54px;top:636px;width:5px;height:1px;background:#000"></div>
<div style="left:56px;top:634px;width:1px;height:5px;background:#000"></div>
<div style="left:62px;top:636px;width:5px;height:1px;background:repeating-linear-gradient(90deg,#808080 0 1px,transparent 1px 2px)"></div>
<svg style="left:68px;top:631px;" width="15" height="13" viewBox="0 0 15 13"><defs><linearGradient id="fdg" x1="0" y1="0" x2="1" y2="1"><stop offset="0" stop-color="#fff4c8"/><stop offset="1" stop-color="#f0b048"/></linearGradient></defs><path d="M.5 11.500V2.500Q.5 .5 2.500 .5H4.500Q6 .5 6.500 2.500H11.500V11.500Z" fill="url(#fdg)" stroke="#c88838"/><path d="M1.500 10.500L4.500 5.500H11" fill="none" stroke="#d09848" stroke-width=".9"/><rect x="8.500" y="6.500" width="6" height="6" fill="#eef2fa" stroke="#203878"/><path d="M9 12.500H14.500V7" fill="none" stroke="#8090c0"/></svg>
<span style="left:87.5px;top:631px;;letter-spacing:-0.391px;">src</span>
<div style="left:39px;top:653px;width:10px;height:1px;background:repeating-linear-gradient(90deg,#808080 0 1px,transparent 1px 2px)"></div>
<svg style="left:51px;top:646px;" width="11" height="14" viewBox="0 0 11 14"><defs><linearGradient id="cfg" x1="0" y1="0" x2="1" y2="1"><stop offset="0" stop-color="#fff"/><stop offset="1" stop-color="#e4ecfa"/></linearGradient></defs><path d="M.5 .5H7L10.500 4V13.500H.5Z" fill="url(#cfg)" stroke="#a89050"/><path d="M7 .5V4H10.500Z" fill="#ecdcb0" stroke="#a89050" stroke-width=".8"/><text x="3.300" y="11.300" font-family="Liberation Sans" font-weight="bold" font-size="10.500" fill="#2070a8">c</text><rect x="1.800" y="9.800" width="1.600" height="1.600" fill="#2070a8"/></svg>
<span style="left:68.5px;top:648px;;letter-spacing:-0.318px;">main.c</span>
<div style="left:4px;top:712px;width:1672px;height:200px;border:1px solid #808080;border-radius:7px 7px 0 0;background:#d4d0c8"></div>
<svg style="left:4px;top:712px;" width="113" height="24" viewBox="0 0 113 24"><defs><linearGradient id="tg4_712" x1="0" y1="0" x2="0" y2="1"><stop offset="0" stop-color="#fff"/><stop offset="1" stop-color="#d4d0c8"/></linearGradient></defs><path d="M0 23V6Q0 0 6 0H77C89 0 91 23 111 23Z" fill="url(#tg4_712)"/><path d="M.5 24V7Q.5 .5 7 .5H77C89 .5 91 23.500 111 23.500" fill="none" stroke="#808080"/></svg>
<div style="left:115px;top:735px;width:1560px;height:1px;background:#808080"></div>
<div style="left:7px;top:738px;width:1666px;height:171px;background:#fff"></div>
<svg style="left:10px;top:717px;" width="14" height="14" viewBox="0 0 16 16"><rect x="1.500" y="1.500" width="13" height="10" fill="#3868c0" stroke="#183878"/><rect x="3" y="3" width="10" height="7" fill="#dce8fc"/><path d="M4 5h6M4 7h4" stroke="#5078c0" stroke-width=".8"/><path d="M5 12h6v1.500h2v1.500H3v-1.500h2z" fill="#506890"/></svg>
<span class="tab" style="left:27.5px;top:719px;;letter-spacing:-0.408px;">Console</span>
<svg style="left:74px;top:719px;" width="10" height="10" viewBox="0 0 10 10"><path d="M.5 .5H3L5 2.500 7 .5H9.500V3L7.500 5 9.500 7V9.500H7L5 7.500 3 9.500H.5V7L2.500 5 .5 3Z" fill="#fff" stroke="#000" stroke-width="1"/></svg>
<svg style="left:1495px;top:717px;" width="16" height="16" viewBox="0 0 16 16"><defs><linearGradient id="wg" x1="0" y1="0" x2="1" y2="1"><stop offset="0" stop-color="#fff"/><stop offset="1" stop-color="#dcecfc"/></linearGradient></defs><rect x="1.500" y="4.500" width="11" height="9" fill="url(#wg)" stroke="#8898c0"/><rect x="2" y="5" width="10" height="2" fill="#6898e0"/><path d="M7 8l3-3" stroke="#203060" stroke-width="1"/><path d="M9 4l2.500-3 3.500 3.500-3 2.500z" fill="#30b040" stroke="#108020" stroke-width=".8"/></svg>
<svg style="left:1519px;top:716px;" width="16" height="16" viewBox="0 0 16 16"><rect x="1.500" y="1.500" width="12" height="10" rx="1" fill="#3070c8" stroke="#2058b0"/><rect x="3" y="3" width="9" height="7" fill="#f0f6ff"/><path d="M4 5h4M4 7h6" stroke="#2050a0" stroke-width="1.100"/><path d="M6 12h3v1.500h2.500v1h-8v-1H6z" fill="#2868c0"/></svg>
<svg style="left:1542px;top:723px;" width="5" height="3" viewBox="0 0 5 3"><path d="M0 0h5L2.500 3z" fill="#000"/></svg>
<svg style="left:1555px;top:716px;" width="16" height="16" viewBox="0 0 16 16"><rect x="1.500" y="3.500" width="13" height="11" fill="url(#wg)" stroke="#a89050"/><rect x="2" y="4" width="9" height="2" fill="#6898e0"/><path d="M13 6c1 4-2 8-6 8.500" fill="none" stroke="#f0d060" stroke-width="1.200"/><path d="M12.500 0v6M9.500 3h6" stroke="#c89020" stroke-width="1.600"/><path d="M12.500 1v4M10.500 3h4" stroke="#fff4c0" stroke-width=".6"/></svg>
<svg style="left:1579px;top:723px;" width="5" height="3" viewBox="0 0 5 3"><path d="M0 0h5L2.500 3z" fill="#000"/></svg>
<svg style="left:1593px;top:716px;" width="16" height="16" viewBox="0 0 16 16"><path d="M.5 .5h7l3 3v9.500H.5z" fill="#fff" stroke="#c8b888"/><path d="M7.500 .5v3h3" fill="#f0e4c0" stroke="#c8b888" stroke-width=".8"/><path d="M2 4h4M2 6h6M2 8h6M2 10h5" stroke="#88a0d8"/><path d="M9 9l5 5M14 9l-5 5" stroke="#505050" stroke-width="2.200"/></svg>
<svg style="left:1616px;top:716px;" width="16" height="16" viewBox="0 0 16 16"><rect x="1.500" y="1.500" width="14" height="12" fill="#e8f0fc" stroke="#a8a078"/><rect x="11" y="2" width="4" height="11" fill="#7090d0"/><rect x="12" y="3" width="2" height="2" fill="#e8f0ff"/><rect x="12" y="6.500" width="2" height="2.500" fill="#c8d8f8"/><rect x="12" y="10.500" width="2" height="2" fill="#e8f0ff"/><rect x=".5" y="9.500" width="7" height="6" rx="1" fill="#f8d050" stroke="#b08818"/><path d="M2 9.500V8c0-2.500 4-2.500 4 0v1.500" fill="none" stroke="#c8a030" stroke-width="1.200"/><rect x="3.300" y="11.500" width="1.400" height="2" fill="#604808"/></svg>
<div style="left:1641px;top:717px;width:10px;height:4px;border:1px solid #404040;background:#fff"></div>
<div style="left:1659px;top:717px;width:10px;height:10px;border:1px solid #404040;background:#fff"></div>
<div style="left:1660px;top:719px;width:8px;height:1px;background:#404040"></div>
<div style="left:5px;top:736px;width:1670px;height:16px;background:#d4d0c8"></div>
<span style="left:6.5px;top:739px;;letter-spacing:-0.154px;">Flash download infomation</span>
<div style="left:5px;top:752px;width:1670px;height:1px;background:#808080"></div>
<div style="left:7px;top:753px;width:1650px;height:140px;background:#fff"></div>
<span class="con1" style="left:8.5px;top:767px;;letter-spacing:-0.024px;">C:\CooCox\CoIDE&gt;"C:/CooCox/CoIDE/bin\coflash.exe"</span>
<span class="con1" style="left:279px;top:767px;;letter-spacing:-0.210px;">program</span>
<span class="con1" style="left:322.5px;top:767px;;letter-spacing:-0.554px;">STM32F103C8</span>
<span class="con1" style="left:394.5px;top:767px;;letter-spacing:-0.206px;">"C:/CooCox/CoIDE/workspace/Example_GPIO/Example_GPIO/Debug/bin/Example_GPIO.elf"</span>
<span class="con1" style="left:841.5px;top:767px;;letter-spacing:-0.047px;">--adapter-name=ST-Link</span>
<span class="con1" style="left:963px;top:767px;;letter-spacing:-0.037px;">--port=SWD</span>
<span class="con1" style="left:1025px;top:767px;;letter-spacing:0.024px;">--adapter-clk=1000000</span>
<span class="con1" style="left:1139.5px;top:767px;;letter-spacing:0.236px;">--erase=affected</span>
<span class="con1" style="left:1226.5px;top:767px;;letter-spacing:-0.512px;">--reset=SYSRESETREQ</span>
<span class="con1" style="left:1341px;top:767px;;letter-spacing:-0.074px;">--driver="C:/CooCox/CoIDE/flash/STM32F10x_MD_64.elf"</span>
<span class="con2" style="left:8.5px;top:780px;color:#f00;letter-spacing:-0.092px;">Error: Connect failed, check config and cable connection</span>
<div style="left:1657px;top:753px;width:16px;height:140px;background:repeating-conic-gradient(#fff 0 25%,#d4d0c8 0 50%) 0 0/2px 2px"></div>
<div class="sbb" style="left:1657px;top:753px;width:16px;height:16px;"></div>
<svg style="left:1661px;top:759px;" width="7" height="4" viewBox="0 0 7 4"><path d="M0 4h7L3.500 0z" fill="#808080"/></svg>
</div></body></html>
